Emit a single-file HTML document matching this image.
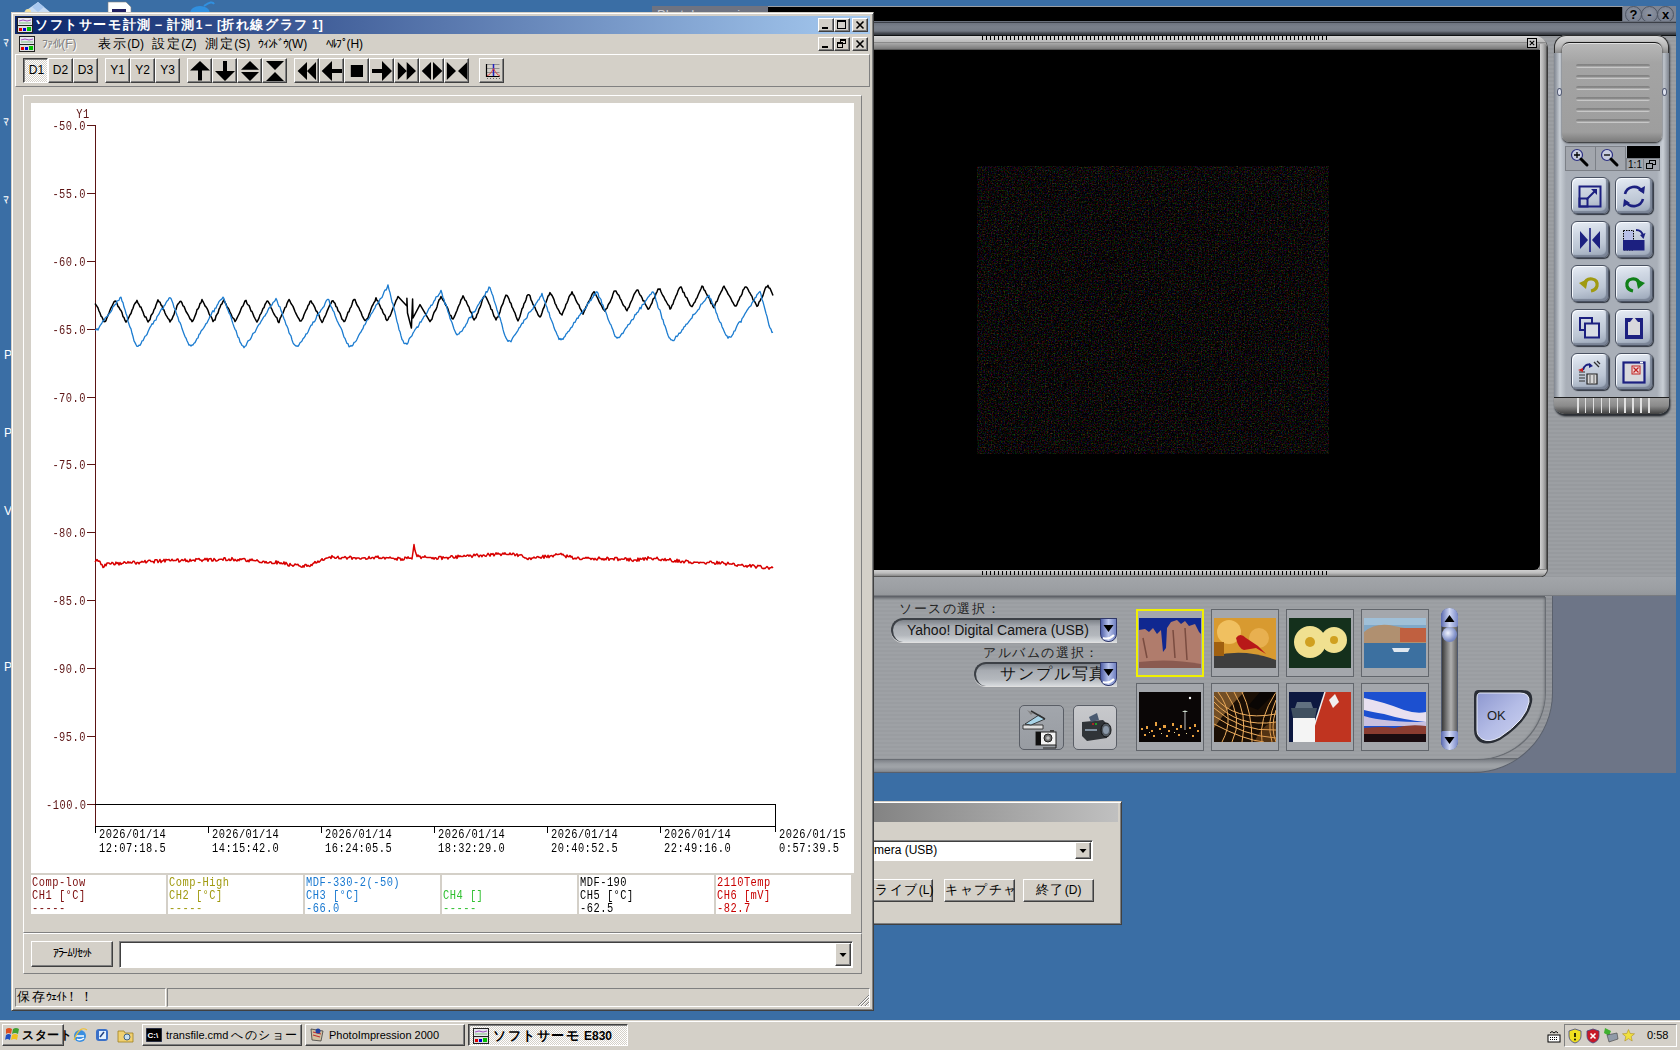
<!DOCTYPE html>
<html><head><meta charset="utf-8">
<style>
*{box-sizing:border-box;margin:0;padding:0}
html,body{width:1680px;height:1050px;overflow:hidden}
body{background:#3a6ea5;position:relative;font-family:"Liberation Sans",sans-serif;font-size:12px;color:#000}
.a{position:absolute}
.raised{background:#d4d0c8;border-top:1px solid #fff;border-left:1px solid #fff;border-right:1px solid #404040;border-bottom:1px solid #404040;box-shadow:inset -1px -1px 0 #808080}
.sunken{border-top:1px solid #808080;border-left:1px solid #808080;border-right:1px solid #fff;border-bottom:1px solid #fff;box-shadow:inset 1px 1px 0 #404040}
.mono{font-family:"Liberation Mono",monospace}
.menu{height:16px;line-height:16px;font-size:12px;white-space:nowrap}
.tbt{height:25px;line-height:25px;text-align:center;font-size:12px}
.ax{font-size:13px;line-height:10px;color:#5c1414;letter-spacing:0.6px;white-space:nowrap;transform:scaleX(.8);transform-origin:100% 0}
.xl{font-size:13px;line-height:13.5px;color:#000;letter-spacing:0.6px;white-space:nowrap;transform:scaleX(.8);transform-origin:0 0}
.lg{font-size:13px;line-height:13px;letter-spacing:0.6px;white-space:nowrap;transform:scaleX(.8);transform-origin:0 0}
.rbtn{width:17px;height:17px;border-radius:50%;border:1px solid #4e5563;background:radial-gradient(circle at 50% 40%,#8d94a2,#727989);color:#000;font-size:13px;font-weight:bold;line-height:15px;text-align:center}
.jf{font-size:1.12em;letter-spacing:.12em;line-height:0}.jh{letter-spacing:-.1em}.nols .jf{font-size:1em;letter-spacing:.05em}
</style></head><body>
<!-- ============ Desktop fragments ============ -->
<svg class="a" style="left:20px;top:0" width="40" height="14"><path d="M18 2 L30 12 H4 Z" fill="#c8dcf4"/><path d="M18 2 L24 7 L18 12 L12 7 Z" fill="#a8c8f0"/><circle cx="8" cy="12" r="3" fill="#f0e0a0"/></svg>
<svg class="a" style="left:105px;top:0" width="30" height="14"><path d="M3 2 H21 L26 7 V14 H3 Z" fill="#fff" stroke="#808080" stroke-width="0.6"/><rect x="7" y="9" width="14" height="3" fill="#202060"/></svg>
<svg class="a" style="left:186px;top:0" width="32" height="14"><ellipse cx="14" cy="13" rx="10" ry="7" fill="#3090e0"/><path d="M18 6 Q26 0 28 4" stroke="#3090e0" stroke-width="2" fill="none"/></svg>
<div class="a" style="left:3px;top:36px;color:#fff;font-size:12px;line-height:14px"><span class="jh">ﾏ</span></div>
<div class="a" style="left:3px;top:115px;color:#fff;font-size:12px;line-height:14px"><span class="jh">ﾏ</span></div>
<div class="a" style="left:3px;top:193px;color:#fff;font-size:12px;line-height:14px"><span class="jh">ﾏ</span></div>
<div class="a" style="left:4px;top:348px;color:#fff;font-size:12px;line-height:14px">P</div>
<div class="a" style="left:4px;top:426px;color:#fff;font-size:12px;line-height:14px">P</div>
<div class="a" style="left:4px;top:504px;color:#fff;font-size:12px;line-height:14px">V</div>
<div class="a" style="left:4px;top:660px;color:#fff;font-size:12px;line-height:14px">P</div>
<!-- ============ PhotoImpression ============ -->
<div class="a" style="left:652px;top:6px;width:116px;height:10px;background:#6e7381;color:#c8ccd4;font-size:13px;line-height:18px;padding-left:5px;overflow:hidden">PhotoImpression</div>
<div class="a" style="left:768px;top:6px;width:908px;height:767px;background:repeating-linear-gradient(180deg,#9c9fa3 0 2px,#979a9e 2px 4px)"></div>
<!-- title black field -->
<div class="a" style="left:768px;top:7px;width:855px;height:15px;background:#000;border-bottom:1px solid #606672;border-right:1px solid #606672"></div>
<div class="a" style="left:1623px;top:6px;width:53px;height:16px;background:#7e8593"></div>
<div class="a rbtn" style="left:1625px;top:6px">?</div>
<div class="a rbtn" style="left:1641px;top:6px">-</div>
<div class="a rbtn" style="left:1657px;top:6px">x</div>
<!-- band -->
<div class="a" style="left:768px;top:21px;width:908px;height:15px;background:linear-gradient(180deg,#6a707c 0,#6a707c 1px,#3c4048 1px,#3c4048 2px,#6e7480 2px,#7a808b 6px,#747a85 10px,#4a4e56 12px,#30343a 14px,#101214 14px)"></div>
<!-- preview frame -->
<div class="a" style="left:768px;top:36px;width:779px;height:541px;border-radius:0 12px 9px 0;background:#b4b4b4;box-shadow:1px 1px 0 #3a3a3a"></div>
<div class="a" style="left:768px;top:36px;width:779px;height:14px;border-radius:0 12px 0 0;background:linear-gradient(180deg,#d8d8d8 0,#bebebe 5px,#bcbcbc 6px,#8a8a8a 6px,#8a8a8a 7px,#aaaaaa 7px,#7a7a7a 13px,#3a3a3a 14px)"></div>
<div class="a" style="left:1539px;top:44px;width:8px;height:526px;border-radius:0 4px 0 0;background:linear-gradient(90deg,#3a3a3a 0,#cfcfcf 1px,#b4b4b4 50%,#8a8a8a 85%,#3a3a3a)"></div>
<div class="a" style="left:768px;top:569px;width:779px;height:8px;border-radius:0 0 10px 0;background:linear-gradient(180deg,#3a3a3a 0,#cfcfcf 1px,#bdbdbd 50%,#8a8a8a 85%,#3a3a3a)"></div>
<div class="a" style="left:768px;top:50px;width:772px;height:520px;background:#000;border-radius:0 0 6px 0"></div>
<div class="a" style="left:982px;top:36px;width:347px;height:4px;background:repeating-linear-gradient(90deg,#000 0 1px,transparent 1px 4px)"></div>
<div class="a" style="left:982px;top:571px;width:347px;height:4px;background:repeating-linear-gradient(90deg,#000 0 1px,transparent 1px 4px)"></div>
<div class="a" style="left:1527px;top:38px;width:10px;height:10px;border:1.3px solid #000;background:#c8c8c8"></div>
<svg class="a" style="left:1527px;top:38px" width="10" height="10"><path d="M2.8 2.8 L7.2 7.2 M7.2 2.8 L2.8 7.2" stroke="#000" stroke-width="1.1"/></svg>
<svg class="a" style="left:977px;top:166px" width="352" height="288"><filter id="nz" x="0" y="0" width="100%" height="100%" color-interpolation-filters="sRGB"><feTurbulence type="fractalNoise" baseFrequency="0.7" numOctaves="2" seed="3"/><feColorMatrix values="0.8 0 0 0 -0.375  0 0.7 0 0 -0.335  0 0 0.7 0 -0.335  0 0 0 0 1"/></filter><rect width="352" height="288" fill="#000"/><rect width="352" height="288" filter="url(#nz)"/></svg>
<!-- band below preview -->
<div class="a" style="left:768px;top:577px;width:908px;height:19px;background:linear-gradient(180deg,#a2a5a9 0%,#9c9fa3 60%,#95989c 92%,#6a6d72 100%)"></div>
<!-- lower panel -->
<div class="a" style="left:1300px;top:596px;width:376px;height:177px;background:#6d7587"></div>
<div class="a" style="left:768px;top:596px;width:785px;height:177px;border-bottom-right-radius:80px;background:linear-gradient(180deg,transparent 0,transparent 162px,#5e6268 162px,#7e8288 164px,#9a9ea3 168px,#a0a4a8 171px,#8a8e94 175px,#6a6e74 177px),repeating-linear-gradient(180deg,#95989d 0 2px,#8e9196 2px 4px);border-right:1px solid #5a606c;border-bottom:1px solid #5a606c"></div>
<div class="a" style="left:768px;top:596px;width:777px;height:163px;border-bottom-right-radius:68px;background:repeating-linear-gradient(180deg,#9ea1a5 0 2px,#9a9da1 2px 4px);box-shadow:inset 0 2px 3px #55595f,1px 1px 0 #6a6e74"></div>
<div class="a" style="left:1554px;top:35px;width:115px;height:379px;border-radius:12px 12px 10px 10px;background:linear-gradient(90deg,#7f858f 0,#c9cfd6 6px,#a9afb8 12px,#a9afb8 103px,#c9cfd6 109px,#7f858f 115px);box-shadow:1px 2px 2px #3a3e44"></div>
<div class="a" style="left:1554px;top:35px;width:115px;height:18px;border-radius:12px 12px 0 0;background:linear-gradient(180deg,#d8d8d8,#b8b8b8 60%,#8a8a8a);border:1px solid #2e2e2e;border-bottom:none"></div>
<div class="a" style="left:1562px;top:42px;width:100px;height:100px;border-radius:7px;background:linear-gradient(180deg,#b8b8b8,#a4a4a4 20%,#9e9e9e 90%,#7a7a7a);border-top:1px solid #1a1a1a;box-shadow:0 1px 2px #202020,inset 0 1px 0 #e0e0e0"></div>
<div class="a" style="left:1576px;top:64px;width:74px;height:4px;border-radius:2px;background:linear-gradient(180deg,#808080,#8a8a8a 40%,#d8d8d8)"></div>
<div class="a" style="left:1576px;top:75px;width:74px;height:4px;border-radius:2px;background:linear-gradient(180deg,#808080,#8a8a8a 40%,#d8d8d8)"></div>
<div class="a" style="left:1576px;top:86px;width:74px;height:4px;border-radius:2px;background:linear-gradient(180deg,#808080,#8a8a8a 40%,#d8d8d8)"></div>
<div class="a" style="left:1576px;top:97px;width:74px;height:4px;border-radius:2px;background:linear-gradient(180deg,#808080,#8a8a8a 40%,#d8d8d8)"></div>
<div class="a" style="left:1576px;top:108px;width:74px;height:4px;border-radius:2px;background:linear-gradient(180deg,#808080,#8a8a8a 40%,#d8d8d8)"></div>
<div class="a" style="left:1576px;top:119px;width:74px;height:4px;border-radius:2px;background:linear-gradient(180deg,#808080,#8a8a8a 40%,#d8d8d8)"></div>
<div class="a" style="left:1557px;top:88px;width:5px;height:8px;border-radius:50%;background:#dfe3f0;border:1px solid #505870"></div>
<div class="a" style="left:1662px;top:88px;width:5px;height:8px;border-radius:50%;background:#dfe3f0;border:1px solid #505870"></div>
<div class="a" style="left:1565px;top:146px;width:31px;height:25px;background:#a2a6ad;border:1px solid #7c8087"></div>
<div class="a" style="left:1595px;top:146px;width:31px;height:25px;background:#a2a6ad;border:1px solid #7c8087"></div>
<svg class="a" style="left:1569px;top:148px" width="24" height="22"><circle cx="8" cy="7" r="5.5" fill="#c8cce0" stroke="#2a2e80" stroke-width="1.2"/><path d="M5 7 H11 M8 4 V10" stroke="#000" stroke-width="1.3"/><path d="M12 11 L18 17" stroke="#000" stroke-width="3" stroke-linecap="round"/></svg>
<svg class="a" style="left:1599px;top:148px" width="24" height="22"><circle cx="8" cy="7" r="5.5" fill="#c8cce0" stroke="#2a2e80" stroke-width="1.2"/><path d="M5 7 H11" stroke="#000" stroke-width="1.3"/><path d="M12 11 L18 17" stroke="#000" stroke-width="3" stroke-linecap="round"/></svg>
<div class="a" style="left:1627px;top:146px;width:33px;height:12px;background:#000"></div>
<div class="a" style="left:1626px;top:158px;width:18px;height:13px;background:#a2a6ad;border:1px solid #7c8087;font-size:10px;line-height:11px;text-align:center;color:#000">1:1</div>
<div class="a" style="left:1643px;top:158px;width:17px;height:13px;background:#a2a6ad;border:1px solid #7c8087"></div>
<svg class="a" style="left:1643px;top:158px" width="17" height="13"><rect x="6.5" y="2.5" width="6" height="4" fill="none" stroke="#000"/><rect x="3.5" y="5.5" width="6" height="5" fill="#a2a6ad" stroke="#000"/></svg>
<div class="a" style="left:1571px;top:177px;width:38px;height:37px;border-radius:6px;background:linear-gradient(170deg,#e8eef6 0%,#d0d8e4 30%,#bcc6d4 65%,#96a2b4 100%);border:1px solid #4a5262;box-shadow:inset 1px 1px 0 #f8fbff,inset -2px -2px 1px #7a8496,1px 1px 1px #303640"></div>
<svg class="a" style="left:1571px;top:177px" width="38" height="37"><rect x="8.5" y="9.5" width="21" height="20" fill="none" stroke="#1c2080" stroke-width="2"/><rect x="8.5" y="21.5" width="8" height="8" fill="none" stroke="#1c2080" stroke-width="2"/><path d="M15.5 22.5 L25 13" stroke="#1c2080" stroke-width="2"/><path d="M20 12 H26 V18 Z" fill="#1c2080"/></svg>
<div class="a" style="left:1615px;top:177px;width:38px;height:37px;border-radius:6px;background:linear-gradient(170deg,#e8eef6 0%,#d0d8e4 30%,#bcc6d4 65%,#96a2b4 100%);border:1px solid #4a5262;box-shadow:inset 1px 1px 0 #f8fbff,inset -2px -2px 1px #7a8496,1px 1px 1px #303640"></div>
<svg class="a" style="left:1615px;top:177px" width="38" height="37"><path d="M10 17 A9.5 9.5 0 0 1 27 14" stroke="#1c2080" stroke-width="2.6" fill="none"/><path d="M28 22 A9.5 9.5 0 0 1 11 25" stroke="#1c2080" stroke-width="2.6" fill="none"/><path d="M23 13 L30 9 L29 17 Z M15 26 L8 30 L9 22 Z" fill="#1c2080"/></svg>
<div class="a" style="left:1571px;top:221px;width:38px;height:37px;border-radius:6px;background:linear-gradient(170deg,#e8eef6 0%,#d0d8e4 30%,#bcc6d4 65%,#96a2b4 100%);border:1px solid #4a5262;box-shadow:inset 1px 1px 0 #f8fbff,inset -2px -2px 1px #7a8496,1px 1px 1px #303640"></div>
<svg class="a" style="left:1571px;top:221px" width="38" height="37"><path d="M9 10 L17 19 L9 28 Z M29 10 L21 19 L29 28 Z" fill="#1c2080"/><path d="M19 7 V31" stroke="#1c2080" stroke-width="1.6"/></svg>
<div class="a" style="left:1615px;top:221px;width:38px;height:37px;border-radius:6px;background:linear-gradient(170deg,#e8eef6 0%,#d0d8e4 30%,#bcc6d4 65%,#96a2b4 100%);border:1px solid #4a5262;box-shadow:inset 1px 1px 0 #f8fbff,inset -2px -2px 1px #7a8496,1px 1px 1px #303640"></div>
<svg class="a" style="left:1615px;top:221px" width="38" height="37"><rect x="8.5" y="9.5" width="10" height="19.5" fill="#b8c0e8" stroke="#000" stroke-dasharray="1.5 1" stroke-width="1"/><rect x="8" y="19" width="21.5" height="10.5" fill="#1c2080"/><path d="M21 9 Q27 9 28 15" stroke="#1c2080" stroke-width="1.8" fill="none"/><path d="M25 14 L28.5 18 L30.5 12 Z" fill="#1c2080"/></svg>
<div class="a" style="left:1571px;top:265px;width:38px;height:37px;border-radius:6px;background:linear-gradient(170deg,#e8eef6 0%,#d0d8e4 30%,#bcc6d4 65%,#96a2b4 100%);border:1px solid #4a5262;box-shadow:inset 1px 1px 0 #f8fbff,inset -2px -2px 1px #7a8496,1px 1px 1px #303640"></div>
<svg class="a" style="left:1571px;top:265px" width="38" height="37"><path d="M13 20 Q15 13 21 14 Q27 15 26 21 Q25 25 20 26" stroke="#a09a10" stroke-width="3.2" fill="none"/><path d="M8 18 L17 14 L15 24 Z" fill="#a09a10"/></svg>
<div class="a" style="left:1615px;top:265px;width:38px;height:37px;border-radius:6px;background:linear-gradient(170deg,#e8eef6 0%,#d0d8e4 30%,#bcc6d4 65%,#96a2b4 100%);border:1px solid #4a5262;box-shadow:inset 1px 1px 0 #f8fbff,inset -2px -2px 1px #7a8496,1px 1px 1px #303640"></div>
<svg class="a" style="left:1615px;top:265px" width="38" height="37"><path d="M25 20 Q23 13 17 14 Q11 15 12 21 Q13 25 18 26" stroke="#108018" stroke-width="3.2" fill="none"/><path d="M30 18 L21 14 L23 24 Z" fill="#108018"/></svg>
<div class="a" style="left:1571px;top:309px;width:38px;height:37px;border-radius:6px;background:linear-gradient(170deg,#e8eef6 0%,#d0d8e4 30%,#bcc6d4 65%,#96a2b4 100%);border:1px solid #4a5262;box-shadow:inset 1px 1px 0 #f8fbff,inset -2px -2px 1px #7a8496,1px 1px 1px #303640"></div>
<svg class="a" style="left:1571px;top:309px" width="38" height="37"><rect x="9" y="9" width="12" height="12" fill="none" stroke="#1c2080" stroke-width="2"/><rect x="14" y="14.5" width="14" height="14" fill="#d8dce4" stroke="#1c2080" stroke-width="2"/></svg>
<div class="a" style="left:1615px;top:309px;width:38px;height:37px;border-radius:6px;background:linear-gradient(170deg,#e8eef6 0%,#d0d8e4 30%,#bcc6d4 65%,#96a2b4 100%);border:1px solid #4a5262;box-shadow:inset 1px 1px 0 #f8fbff,inset -2px -2px 1px #7a8496,1px 1px 1px #303640"></div>
<svg class="a" style="left:1615px;top:309px" width="38" height="37"><rect x="10" y="9" width="18" height="21" fill="#1c2080"/><rect x="13" y="13" width="12" height="13" fill="#d8d8dc"/><path d="M15 13 L19 8 L23 13 Z" fill="#d8d8dc"/></svg>
<div class="a" style="left:1571px;top:353px;width:38px;height:37px;border-radius:6px;background:linear-gradient(170deg,#e8eef6 0%,#d0d8e4 30%,#bcc6d4 65%,#96a2b4 100%);border:1px solid #4a5262;box-shadow:inset 1px 1px 0 #f8fbff,inset -2px -2px 1px #7a8496,1px 1px 1px #303640"></div>
<svg class="a" style="left:1571px;top:353px" width="38" height="37"><path d="M16 21 H26 V31 H16 Z" fill="#d8d8d8" stroke="#202020" stroke-width="1.2"/><path d="M19 22 V30 M23 22 V30" stroke="#606060"/><path d="M12 17 Q14 10 20 12" stroke="#1c2080" stroke-width="2" fill="none"/><path d="M18 10 L22 13 L18 15 Z" fill="#1c2080"/><path d="M8 19 H14 M8 22 H14 M8 25 H14 M8 28 H14" stroke="#303030" stroke-width="1"/><path d="M7 17 L12 15 L12 19 Z" fill="#d02020"/><path d="M23 9 L28 14 M26 8 L29 11" stroke="#303030" stroke-width="1.3"/></svg>
<div class="a" style="left:1615px;top:353px;width:38px;height:37px;border-radius:6px;background:linear-gradient(170deg,#e8eef6 0%,#d0d8e4 30%,#bcc6d4 65%,#96a2b4 100%);border:1px solid #4a5262;box-shadow:inset 1px 1px 0 #f8fbff,inset -2px -2px 1px #7a8496,1px 1px 1px #303640"></div>
<svg class="a" style="left:1615px;top:353px" width="38" height="37"><rect x="8.5" y="9.5" width="21" height="20" fill="#d8d8dc" stroke="#1c2080" stroke-width="2.2"/><rect x="17" y="13" width="8" height="8" fill="#f0d8d8" stroke="#c02020" stroke-width="1"/><path d="M18.5 14.5 L23.5 19.5 M23.5 14.5 L18.5 19.5" stroke="#c02020" stroke-width="1.2"/><path d="M25 9.5 H28" stroke="#fff" stroke-width="1.5"/></svg>
<div class="a" style="left:1554px;top:397px;width:115px;height:17px;border-radius:0 0 10px 10px;border-top:1px solid #202020;background:linear-gradient(180deg,#a0a0a0,#8a8a8a 50%,#404040);box-shadow:1px 2px 2px #2a2e34"></div>
<div class="a" style="left:1577px;top:398px;width:74px;height:15px;background:repeating-linear-gradient(90deg,#e0e0e0 0 1.5px,transparent 1.5px 7.9px)"></div>
<div class="a" style="left:899px;top:601px;height:16px;line-height:16px;font-size:12px;color:#202020;white-space:nowrap"><span class="jf">ソースの選択：</span></div>
<div class="a" style="left:891px;top:618px;width:226px;height:24px;border-radius:12px 0 0 12px;background:linear-gradient(180deg,#7e838a,#a8acb2 30%,#b4b8bd 70%,#d8dbde);border-top:2px solid #3c4046;border-left:2px solid #3c4046;box-shadow:0 1px 0 #e0e0e0"></div>
<div class="a" style="left:907px;top:621px;height:18px;line-height:18px;font-size:14px;color:#141414;white-space:nowrap">Yahoo! Digital Camera (USB)</div>
<div class="a" style="left:1100px;top:618px;width:17px;height:24px;border-radius:0 0 8px 8px;background:linear-gradient(90deg,#5060a8,#b8c4ec 50%,#7080c0);border:1px solid #30386a"></div>
<svg class="a" style="left:1100px;top:618px" width="17" height="24"><path d="M3.5 7 H13.5 L8.5 14 Z" fill="#000"/><path d="M3 20 Q9 22 14 17" stroke="#fff" stroke-width="2" fill="none"/></svg>
<div class="a" style="left:983px;top:645px;height:16px;line-height:16px;font-size:12px;color:#202020;white-space:nowrap"><span class="jf">アルバムの選択：</span></div>
<div class="a" style="left:974px;top:662px;width:143px;height:24px;border-radius:12px 0 0 12px;background:linear-gradient(180deg,#7e838a,#a8acb2 30%,#b4b8bd 70%,#d8dbde);border-top:2px solid #3c4046;border-left:2px solid #3c4046;box-shadow:0 1px 0 #e0e0e0"></div>
<div class="a" style="left:1000px;top:665px;height:18px;line-height:18px;font-size:14px;color:#141414;white-space:nowrap"><span class="jf">サンプル写真</span></div>
<div class="a" style="left:1100px;top:662px;width:17px;height:24px;border-radius:0 0 8px 8px;background:linear-gradient(90deg,#5060a8,#b8c4ec 50%,#7080c0);border:1px solid #30386a"></div>
<svg class="a" style="left:1100px;top:662px" width="17" height="24"><path d="M3.5 7 H13.5 L8.5 14 Z" fill="#000"/><path d="M3 20 Q9 22 14 17" stroke="#fff" stroke-width="2" fill="none"/></svg>
<div class="a" style="left:1019px;top:705px;width:45px;height:45px;border-radius:5px;background:linear-gradient(180deg,#a2a6ac,#989ca2);border:1px solid #5a5e66"></div>
<svg class="a" style="left:1019px;top:705px" width="45" height="45"><path d="M4 20 L24 20 L24 24 L4 24 Z" fill="#e0e0e0" stroke="#202020" stroke-width="0.8"/><path d="M6 19 L20 10 L26 14 L12 20 Z" fill="#a8d4e8" stroke="#202020" stroke-width="0.8"/><path d="M12 6 L26 14" stroke="#303030" stroke-width="1.5"/><path d="M8 5 L14 8 L12 10 Z" fill="#808080"/><rect x="17" y="27" width="20" height="13" fill="#f4f4f4" stroke="#202020"/><rect x="17" y="27" width="5" height="13" fill="#101010"/><circle cx="29" cy="33" r="4" fill="#707070" stroke="#202020"/><circle cx="29" cy="33" r="1.8" fill="#c0c0c0"/><path d="M24 43 H37 V40" stroke="#202020" fill="none"/><rect x="31" y="25" width="4" height="2" fill="#404040"/></svg>
<div class="a" style="left:1073px;top:705px;width:44px;height:45px;border-radius:5px;background:linear-gradient(180deg,#c8c9cc,#b8babe);border:1px solid #5a5e66"></div>
<svg class="a" style="left:1073px;top:705px" width="44" height="45"><path d="M9 17 L30 15 L34 19 L34 33 L14 36 L9 31 Z" fill="#303438"/><path d="M16 12 L24 8 L26 15 L18 17 Z" fill="#4a5a70"/><ellipse cx="33" cy="25" rx="5" ry="7" fill="#505860" stroke="#101010"/><ellipse cx="33" cy="25" rx="3" ry="4" fill="#8a98a8"/><path d="M12 25 H24" stroke="#8090a0" stroke-width="2"/><circle cx="20" cy="19" r="1" fill="#d02020"/><circle cx="23" cy="19" r="1" fill="#20c020"/></svg>
<div class="a" style="left:1136px;top:609px;width:68px;height:68px;background:#a4a7ac;border:2px solid #f0f000"></div>
<svg class="a" style="left:1139px;top:618px" width="62" height="50"><rect width="62" height="50" fill="#102890"/><path d="M0 12 L6 11 L10 14 L14 10 L18 16 L22 12 L24 34 L27 30 L28 10 L32 4 L38 2 L42 6 L46 3 L50 8 L56 6 L60 14 L62 16 V50 H0 Z" fill="#b07c6c"/><path d="M4 20 L8 40 M34 12 L36 40 M46 10 L48 42" stroke="#7a4c40" stroke-width="1.5"/><path d="M0 44 Q30 40 62 46 V50 H0 Z" fill="#8a5a50"/></svg>
<div class="a" style="left:1211px;top:609px;width:68px;height:68px;background:#a4a7ac;border:1px solid #62666c"></div>
<svg class="a" style="left:1214px;top:618px" width="62" height="50"><rect width="62" height="50" fill="#d89a30"/><circle cx="15" cy="14" r="12" fill="#f0c060"/><circle cx="45" cy="20" r="10" fill="#e8b050"/><path d="M0 38 Q30 30 62 42 V50 H0 Z" fill="#3e3e3e"/><path d="M22 20 Q26 14 32 20 L44 28 L52 36 L42 30 L30 32 Q24 30 22 20 Z" fill="#b81818"/><rect x="0" y="24" width="10" height="14" fill="#a06010"/></svg>
<div class="a" style="left:1286px;top:609px;width:68px;height:68px;background:#a4a7ac;border:1px solid #62666c"></div>
<svg class="a" style="left:1289px;top:618px" width="62" height="50"><rect width="62" height="50" fill="#14301c"/><circle cx="21" cy="24" r="16" fill="#f0e090"/><circle cx="45" cy="22" r="13" fill="#f0e090"/><circle cx="21" cy="24" r="5" fill="#d0a020"/><circle cx="45" cy="22" r="4" fill="#d0a020"/></svg>
<div class="a" style="left:1361px;top:609px;width:68px;height:68px;background:#a4a7ac;border:1px solid #62666c"></div>
<svg class="a" style="left:1364px;top:618px" width="62" height="50"><rect width="62" height="50" fill="#80a8c8"/><rect y="0" width="62" height="7" fill="#a0c0d8"/><path d="M0 14 Q12 4 30 8 L62 14 V26 H0 Z" fill="#b09070"/><rect x="36" y="10" width="26" height="14" fill="#c06040"/><rect y="25" width="62" height="25" fill="#3c70a0"/><path d="M28 30 H46 L44 34 H30 Z" fill="#e0e8f0"/></svg>
<div class="a" style="left:1136px;top:683px;width:68px;height:68px;background:#a4a7ac;border:1px solid #62666c"></div>
<svg class="a" style="left:1139px;top:692px" width="62" height="50"><rect width="62" height="50" fill="#0a0606"/><circle cx="51" cy="6" r="1.2" fill="#fff"/><path d="M43 20 Q46 17 49 20 Z" fill="#d0e0d0"/><path d="M46 20 V38" stroke="#a0a0a0" stroke-width="1.2"/><g fill="#e8a040"><rect x="2" y="36" width="2" height="2"/><rect x="7" y="34" width="2" height="3"/><rect x="12" y="38" width="2" height="2"/><rect x="16" y="30" width="2" height="4"/><rect x="20" y="36" width="2" height="2"/><rect x="24" y="33" width="3" height="3"/><rect x="29" y="38" width="2" height="2"/><rect x="33" y="31" width="2" height="3"/><rect x="37" y="36" width="2" height="2"/><rect x="41" y="33" width="2" height="3"/><rect x="50" y="35" width="2" height="2"/><rect x="55" y="32" width="2" height="3"/><rect x="58" y="38" width="2" height="2"/><rect x="5" y="42" width="2" height="2"/><rect x="14" y="43" width="2" height="2"/><rect x="27" y="43" width="2" height="2"/><rect x="39" y="42" width="2" height="2"/><rect x="53" y="43" width="2" height="2"/></g><g fill="#f0e0a0"><rect x="10" y="40" width="1" height="1"/><rect x="22" y="41" width="1" height="1"/><rect x="35" y="40" width="1" height="1"/><rect x="47" y="41" width="1" height="1"/></g></svg>
<div class="a" style="left:1211px;top:683px;width:68px;height:68px;background:#a4a7ac;border:1px solid #62666c"></div>
<svg class="a" style="left:1214px;top:692px" width="62" height="50"><rect width="62" height="50" fill="#1a0e04"/><g stroke="#f0b060" stroke-width="1" fill="none"><path d="M0 4 Q20 30 62 22 M0 10 Q24 36 62 30 M0 16 Q26 40 62 38 M0 24 Q30 44 62 46 M0 32 Q30 48 50 50 M4 0 Q22 24 8 50 M12 0 Q30 26 18 50 M20 0 Q34 22 28 50 M28 0 Q38 20 38 50 M62 0 Q44 28 48 50 M62 8 Q52 30 58 50 M62 18 Q56 36 62 50"/></g><path d="M34 14 L46 0 H62 L44 18 Z" fill="#0a0604"/><path d="M0 0 H30 Q12 18 0 36 Z" fill="#e0a050" opacity="0.45"/><path d="M40 50 Q50 30 62 30 V50 Z" fill="#c07830" opacity="0.35"/></svg>
<div class="a" style="left:1286px;top:683px;width:68px;height:68px;background:#a4a7ac;border:1px solid #62666c"></div>
<svg class="a" style="left:1289px;top:692px" width="62" height="50"><rect width="62" height="50" fill="#0c1840"/><path d="M36 0 H62 V50 H20 Z" fill="#c03420"/><path d="M36 0 L20 50" stroke="#f0f0f0" stroke-width="1.5"/><path d="M40 8 L46 2 L50 10 L44 16 Z" fill="#f0f0f0"/><rect x="4" y="24" width="22" height="26" fill="#f4f4f4"/><path d="M2 16 H28 L26 26 H4 Z" fill="#405060"/><path d="M8 10 H22 L24 16 H6 Z" fill="#607080"/></svg>
<div class="a" style="left:1361px;top:683px;width:68px;height:68px;background:#a4a7ac;border:1px solid #62666c"></div>
<svg class="a" style="left:1364px;top:692px" width="62" height="50"><rect width="62" height="50" fill="#1c50d0"/><path d="M0 6 Q20 10 40 18 Q52 22 62 20 V30 Q40 28 20 22 Q8 20 0 18 Z" fill="#e8e0f0"/><path d="M0 24 Q20 30 62 30 V34 H0 Z" fill="#c8c0e0"/><path d="M0 36 Q20 34 30 36 Q45 32 62 34 V50 H0 Z" fill="#8a3c30"/><rect y="42" width="62" height="8" fill="#1a0c10"/></svg>
<div class="a" style="left:1441px;top:608px;width:17px;height:142px;border-radius:8px;background:linear-gradient(90deg,#3a3a3a,#8a8a8a 40%,#b0b0b0 60%,#606060);border:1px solid #505a70"></div>
<div class="a" style="left:1441px;top:608px;width:17px;height:19px;border-radius:8px 8px 2px 2px;background:linear-gradient(90deg,#5868b0,#d0d8f4 50%,#7888c8)"></div>
<svg class="a" style="left:1441px;top:608px" width="17" height="19"><path d="M3.5 14 H13.5 L8.5 7 Z" fill="#000"/></svg>
<div class="a" style="left:1442px;top:627px;width:15px;height:15px;border-radius:50%;background:radial-gradient(circle at 40% 40%,#f0f4ff,#8090c8 60%,#5060a0)"></div>
<div class="a" style="left:1441px;top:731px;width:17px;height:19px;border-radius:2px 2px 8px 8px;background:linear-gradient(90deg,#5868b0,#d0d8f4 50%,#7888c8)"></div>
<svg class="a" style="left:1441px;top:731px" width="17" height="19"><path d="M3.5 6 H13.5 L8.5 13 Z" fill="#000"/></svg>
<svg class="a" style="left:1470px;top:686px" width="68" height="62"><path d="M8 4 H52 Q64 4 62 16 Q58 36 30 54 Q18 60 10 56 Q4 52 4 44 V10 Q4 4 8 4 Z" fill="#2a2e36"/><path d="M10 7 H50 Q60 7 59 16 Q56 34 30 51 Q19 57 12 53 Q7 50 7 44 V12 Q7 7 10 7 Z" fill="url(#okg)" stroke="#e8ecf8" stroke-width="1"/><defs><linearGradient id="okg" x1="0" y1="0" x2="1" y2="1"><stop offset="0" stop-color="#8e98d0"/><stop offset="0.5" stop-color="#b4bce6"/><stop offset="1" stop-color="#cfd4f2"/></linearGradient></defs><text x="17" y="34" font-family="Liberation Sans" font-size="13" fill="#202020">OK</text></svg><!-- ============ Dialog ============ -->
<div class="a" style="left:860px;top:801px;width:262px;height:124px;background:#d4d0c8;border-top:1px solid #d4d0c8;border-right:1px solid #404040;border-bottom:1px solid #404040;box-shadow:inset 0 1px 0 #fff,inset -1px -1px 0 #808080"></div>
<div class="a" style="left:860px;top:803px;width:258px;height:19px;background:linear-gradient(90deg,#808080,#c0c0c0)"></div>
<div class="a sunken" style="left:860px;top:840px;width:233px;height:21px;background:#fff"></div>
<div class="a" style="left:874px;top:842px;height:17px;line-height:17px;font-size:12px;white-space:nowrap">mera (USB)</div>
<div class="a raised" style="left:1075px;top:842px;width:16px;height:17px"></div>
<svg class="a" style="left:1075px;top:842px" width="16" height="17"><path d="M4.5 7 H11.5 L8 11 Z" fill="#000"/></svg>
<div class="a raised" style="left:860px;top:879px;width:73px;height:23px"></div>
<div class="a" style="left:875px;top:880px;height:21px;line-height:21px;font-size:12px;white-space:nowrap"><span class="jf">ライブ</span>(L)</div>
<div class="a raised" style="left:944px;top:879px;width:71px;height:23px"></div>
<div class="a" style="left:945px;top:880px;width:69px;height:21px;line-height:21px;font-size:12px;white-space:nowrap;overflow:hidden"><span class="jf">キャプチャ</span>(C)</div>
<div class="a raised" style="left:1023px;top:879px;width:71px;height:23px"></div>
<div class="a" style="left:1023px;top:880px;width:71px;height:21px;line-height:21px;font-size:12px;text-align:center;white-space:nowrap"><span class="jf">終了</span>(D)</div>
<!-- ============ Main window ============ -->
<div class="a" style="left:11px;top:12px;width:863px;height:999px;background:#d4d0c8;border-top:1px solid #d4d0c8;border-left:1px solid #d4d0c8;border-right:1px solid #404040;border-bottom:1px solid #404040;box-shadow:inset 1px 1px 0 #fff,inset -1px -1px 0 #808080"></div>
<!-- title bar -->
<div class="a" style="left:15px;top:16px;width:855px;height:18px;background:linear-gradient(90deg,#0a246a 0%,#a6caf0 100%)"></div>
<svg class="a" style="left:17px;top:17px" width="16" height="16" viewBox="0 0 16 16"><rect x="0" y="0" width="16" height="16" fill="#222"/><rect x="1" y="1" width="14" height="7" fill="#e8e8f0"/><path d="M2 4 L6 3 L10 4 L14 3" stroke="#a050c0" stroke-width="1" fill="none"/><path d="M2 6 L14 6" stroke="#80c080" stroke-width="1"/><rect x="1" y="9" width="14" height="6" fill="#ddd"/><rect x="2" y="11" width="3" height="3" fill="#e00000"/><rect x="6" y="11" width="3" height="3" fill="#0000d0"/><rect x="10" y="10" width="4" height="4" fill="#00c000"/></svg>
<div class="a" style="left:35px;top:17px;height:16px;line-height:16px;color:#fff;font-weight:bold;font-size:12px;white-space:nowrap"><span class="jf">ソフトサーモ計測－計測</span>1<span class="jf">－</span>[<span class="jf">折れ線グラフ</span> 1]</div>
<!-- caption buttons -->
<div class="a raised" style="left:818px;top:18px;width:16px;height:14px"></div>
<div class="a" style="left:822px;top:27px;width:6px;height:2px;background:#000"></div>
<div class="a raised" style="left:834px;top:18px;width:16px;height:14px"></div>
<div class="a" style="left:837px;top:20px;width:9px;height:9px;border:1px solid #000;border-top-width:2px"></div>
<div class="a raised" style="left:852px;top:18px;width:16px;height:14px"></div>
<svg class="a" style="left:852px;top:18px" width="16" height="14"><path d="M4.5 3.5 L11.5 10.5 M11.5 3.5 L4.5 10.5" stroke="#000" stroke-width="1.6"/></svg>
<!-- menu bar -->
<svg class="a" style="left:19px;top:36px" width="16" height="16" viewBox="0 0 16 16"><rect x="0" y="0" width="16" height="16" fill="#222"/><rect x="1" y="1" width="14" height="7" fill="#e8e8f0"/><path d="M2 4 L6 3 L10 4 L14 3" stroke="#a050c0" stroke-width="1" fill="none"/><path d="M2 6 L14 6" stroke="#80c080" stroke-width="1"/><rect x="1" y="9" width="14" height="6" fill="#ddd"/><rect x="2" y="11" width="3" height="3" fill="#e00000"/><rect x="6" y="11" width="3" height="3" fill="#0000d0"/><rect x="10" y="10" width="4" height="4" fill="#00c000"/></svg>
<div class="a menu" style="left:42px;top:36px;color:#808080;text-shadow:1px 1px 0 #fff"><span class="jh">ﾌｧｲﾙ</span>(F)</div>
<div class="a menu" style="left:98px;top:36px"><span class="jf">表示</span>(D)</div>
<div class="a menu" style="left:152px;top:36px"><span class="jf">設定</span>(Z)</div>
<div class="a menu" style="left:205px;top:36px"><span class="jf">測定</span>(S)</div>
<div class="a menu" style="left:258px;top:36px"><span class="jh">ｳｨﾝﾄﾞｳ</span>(W)</div>
<div class="a menu" style="left:326px;top:36px"><span class="jh">ﾍﾙﾌﾟ</span>(H)</div>
<div class="a raised" style="left:818px;top:37px;width:16px;height:14px"></div>
<div class="a" style="left:822px;top:46px;width:6px;height:2px;background:#000"></div>
<div class="a raised" style="left:834px;top:37px;width:16px;height:14px"></div>
<div class="a" style="left:840px;top:39px;width:6px;height:5px;border:1px solid #000;border-top-width:2px"></div>
<div class="a" style="left:837px;top:42px;width:6px;height:6px;border:1px solid #000;border-top-width:2px;background:#d4d0c8"></div>
<div class="a raised" style="left:852px;top:37px;width:16px;height:14px"></div>
<svg class="a" style="left:852px;top:37px" width="16" height="14"><path d="M4.5 3.5 L11.5 10.5 M11.5 3.5 L4.5 10.5" stroke="#000" stroke-width="1.6"/></svg>
<!-- toolbar -->
<div class="a" style="left:15px;top:54px;width:855px;height:33px;border-top:1px solid #fff;border-left:1px solid #fff;border-bottom:1px solid #808080;border-right:1px solid #808080"></div>
<div class="a" style="left:23px;top:58px;width:25px;height:25px;border-top:1px solid #404040;border-left:1px solid #404040;border-right:1px solid #fff;border-bottom:1px solid #fff;box-shadow:inset 1px 1px 0 #808080;background:repeating-conic-gradient(#fff 0 25%,#d4d0c8 0 50%) 0 0/2px 2px"></div>
<div class="a tbt" style="left:24px;top:58px;width:25px">D1</div>
<div class="a raised" style="left:48px;top:58px;width:25px;height:25px"></div>
<div class="a tbt" style="left:48px;top:58px;width:25px">D2</div>
<div class="a raised" style="left:73px;top:58px;width:25px;height:25px"></div>
<div class="a tbt" style="left:73px;top:58px;width:25px">D3</div>
<div class="a raised" style="left:105px;top:58px;width:25px;height:25px"></div>
<div class="a tbt" style="left:105px;top:58px;width:25px">Y1</div>
<div class="a raised" style="left:130px;top:58px;width:25px;height:25px"></div>
<div class="a tbt" style="left:130px;top:58px;width:25px">Y2</div>
<div class="a raised" style="left:155px;top:58px;width:25px;height:25px"></div>
<div class="a tbt" style="left:155px;top:58px;width:25px">Y3</div>
<div class="a raised" style="left:187px;top:58px;width:25px;height:25px"></div>
<svg class="a" style="left:187px;top:58px" width="25" height="25"><path d="M13 3 L23 12.6 L15 12.6 L15 22.6 L11 22.6 L11 12.6 L3 12.6 Z" fill="#000"/></svg>
<div class="a raised" style="left:212px;top:58px;width:25px;height:25px"></div>
<svg class="a" style="left:212px;top:58px" width="25" height="25"><path d="M11 3 L15 3 L15 13 L23 13 L13 23 L3 13 L11 13 Z" fill="#000"/></svg>
<div class="a raised" style="left:237px;top:58px;width:25px;height:25px"></div>
<svg class="a" style="left:237px;top:58px" width="25" height="25"><path d="M13 3 L22 11.7 L4 11.7 Z M4 13.9 L22 13.9 L13 23 Z" fill="#000"/></svg>
<div class="a raised" style="left:262px;top:58px;width:25px;height:25px"></div>
<svg class="a" style="left:262px;top:58px" width="25" height="25"><path d="M4 3 L22 3 L13 12 Z M13 14 L22 23 L4 23 Z" fill="#000"/></svg>
<div class="a raised" style="left:294px;top:58px;width:25px;height:25px"></div>
<svg class="a" style="left:294px;top:58px" width="25" height="25"><path d="M3.6 13 L13 4 L13 22 Z M13 13 L22 4 L22 22 Z" fill="#000"/></svg>
<div class="a raised" style="left:319px;top:58px;width:25px;height:25px"></div>
<svg class="a" style="left:319px;top:58px" width="25" height="25"><path d="M2.7 13 L13 3 L13 11 L23 11 L23 15 L13 15 L13 23 Z" fill="#000"/></svg>
<div class="a raised" style="left:344px;top:58px;width:25px;height:25px"></div>
<svg class="a" style="left:344px;top:58px" width="25" height="25"><path d="M6.8 7 L19 7 L19 19 L6.8 19 Z" fill="#000"/></svg>
<div class="a raised" style="left:369px;top:58px;width:25px;height:25px"></div>
<svg class="a" style="left:369px;top:58px" width="25" height="25"><path d="M3 11 L13 11 L13 3 L23 13 L13 23 L13 15 L3 15 Z" fill="#000"/></svg>
<div class="a raised" style="left:394px;top:58px;width:25px;height:25px"></div>
<svg class="a" style="left:394px;top:58px" width="25" height="25"><path d="M3.8 4 L12.7 13 L3.8 22 Z M12.7 4 L22 13 L12.7 22 Z" fill="#000"/></svg>
<div class="a raised" style="left:419px;top:58px;width:25px;height:25px"></div>
<svg class="a" style="left:419px;top:58px" width="25" height="25"><path d="M2.8 13 L12 4 L12 22 Z M14 4 L23.3 13 L14 22 Z" fill="#000"/></svg>
<div class="a raised" style="left:444px;top:58px;width:25px;height:25px"></div>
<svg class="a" style="left:444px;top:58px" width="25" height="25"><path d="M2.8 4 L12 13 L2.8 22 Z M23.3 4 L23.3 22 L14 13 Z" fill="#000"/></svg>
<div class="a raised" style="left:479px;top:58px;width:25px;height:25px"></div>
<svg class="a" style="left:479px;top:58px" width="25" height="25"><path d="M7 6.5 H20.5 M7 10.5 H20.5 M7 14.5 H20.5 M7 18.5 H20.5" stroke="#909090" stroke-width="1"/><path d="M14.5 6 V19" stroke="#2020c0" stroke-width="1.5"/><path d="M8 17.5 Q11 17.5 14.5 10.5 Q18 17.5 21 17.5" stroke="#e04040" stroke-width="1" fill="none"/><path d="M7.5 6 V18.5 H20.5" stroke="#000" stroke-width="1.2" fill="none"/><path d="M8.5 20 V21 M11.5 20 V21 M14.5 20 V21 M17.5 20 V21 M20.5 20 V21" stroke="#666" stroke-width="1"/></svg><div class="a" style="left:23px;top:95px;width:839px;height:838px;border-top:1px solid #fff;border-left:1px solid #fff;border-right:1px solid #808080;border-bottom:1px solid #808080"></div>
<div class="a" style="left:31px;top:103px;width:823px;height:770px;background:#fff"></div>
<svg class="a" style="left:31px;top:103px" width="823" height="770" viewBox="31 103 823 770">
<g stroke="#5c1414" stroke-width="1" fill="none" shape-rendering="crispEdges">
<path d="M95.5 125 V826"/>
<path d="M87 125.5 H95"/>
<path d="M87 193.5 H95"/>
<path d="M87 261.5 H95"/>
<path d="M87 329.5 H95"/>
<path d="M87 397.5 H95"/>
<path d="M87 464.5 H95"/>
<path d="M87 532.5 H95"/>
<path d="M87 600.5 H95"/>
<path d="M87 668.5 H95"/>
<path d="M87 736.5 H95"/>
<path d="M87 804.5 H95"/>
</g>
<g stroke="#000" stroke-width="1" fill="none" shape-rendering="crispEdges">
<path d="M95 804.5 H775.5 V832 M95 826.5 H775"/>
<path d="M95.5 826 V833"/>
<path d="M208.5 826 V833"/>
<path d="M321.5 826 V833"/>
<path d="M434.5 826 V833"/>
<path d="M547.5 826 V833"/>
<path d="M660.5 826 V833"/>
</g>
<polyline points="95.0,303.5 96.0,304.9 97.0,306.4 98.0,307.9 99.0,311.0 100.0,313.0 101.0,316.1 102.0,317.0 103.0,319.4 104.0,321.7 105.0,321.6 106.0,320.6 107.0,317.6 108.0,315.4 109.0,313.1 110.0,310.2 111.0,307.9 112.0,306.1 113.0,304.0 114.0,301.9 115.0,301.0 116.0,301.2 117.0,303.5 118.0,306.4 119.0,307.4 120.0,309.4 121.0,310.5 122.0,312.6 123.0,316.6 124.0,317.5 125.0,320.4 126.0,322.1 127.0,320.6 128.0,319.1 129.0,317.0 130.0,314.8 131.0,313.5 132.0,310.2 133.0,308.3 134.0,305.1 135.0,303.4 136.0,302.4 137.0,300.4 138.0,303.1 139.0,304.5 140.0,306.9 141.0,306.9 142.0,309.9 143.0,312.0 144.0,315.1 145.0,317.1 146.0,317.0 147.0,319.8 148.0,322.0 149.0,320.6 150.0,319.6 151.0,315.5 152.0,314.2 153.0,312.9 154.0,309.6 155.0,308.3 156.0,305.0 157.0,302.4 158.0,299.9 159.0,301.8 160.0,302.1 161.0,304.9 162.0,305.9 163.0,309.4 164.0,310.0 165.0,313.0 166.0,315.1 167.0,316.6 168.0,318.5 169.0,319.3 170.0,322.0 171.0,320.1 172.0,319.1 173.0,316.4 174.0,314.6 175.0,310.8 176.0,309.5 177.0,305.7 178.0,304.0 179.0,302.9 180.0,301.5 181.0,301.3 182.0,303.0 183.0,305.9 184.0,306.4 185.0,308.9 186.0,311.5 187.0,313.0 188.0,314.6 189.0,316.5 190.0,318.9 191.0,319.7 192.0,321.6 193.0,320.6 194.0,318.6 195.0,315.9 196.0,313.6 197.0,309.7 198.0,308.9 199.0,307.1 200.0,303.5 201.0,302.9 202.0,299.5 203.0,301.7 204.0,303.5 205.0,305.9 206.0,306.9 207.0,308.4 208.0,310.5 209.0,313.6 210.0,315.6 211.0,316.5 212.0,318.4 213.0,321.6 214.0,320.1 215.0,320.1 216.0,316.0 217.0,314.3 218.0,313.0 219.0,309.2 220.0,307.3 221.0,304.6 222.0,303.9 223.0,301.4 224.0,299.9 225.0,302.6 226.0,304.0 227.0,306.9 228.0,307.9 229.0,309.4 230.0,312.0 231.0,314.1 232.0,316.6 233.0,318.0 234.0,318.8 235.0,321.5 236.0,320.1 237.0,318.1 238.0,316.0 239.0,314.2 240.0,311.9 241.0,309.1 242.0,306.8 243.0,306.0 244.0,303.4 245.0,300.9 246.0,300.3 247.0,303.6 248.0,304.9 249.0,305.4 250.0,307.9 251.0,311.0 252.0,311.5 253.0,314.1 254.0,316.6 255.0,318.5 256.0,320.3 257.0,322.0 258.0,320.1 259.0,318.1 260.0,314.9 261.0,313.6 262.0,311.3 263.0,308.5 264.0,307.7 265.0,304.5 266.0,302.9 267.0,301.0 268.0,301.3 269.0,303.0 270.0,304.4 271.0,307.9 272.0,309.4 273.0,312.0 274.0,314.0 275.0,315.6 276.0,317.0 277.0,317.9 278.0,321.7 279.0,322.6 280.0,318.6 281.0,316.6 282.0,314.4 283.0,313.1 284.0,310.2 285.0,307.4 286.0,307.1 287.0,303.5 288.0,301.4 289.0,299.5 290.0,301.2 291.0,303.5 292.0,304.9 293.0,306.4 294.0,308.9 295.0,311.5 296.0,313.6 297.0,315.6 298.0,317.5 299.0,318.9 300.0,321.1 301.0,321.1 302.0,319.6 303.0,318.0 304.0,314.8 305.0,312.5 306.0,310.2 307.0,308.8 308.0,305.6 309.0,304.4 310.0,301.4 311.0,300.9 312.0,303.1 313.0,304.0 314.0,305.9 315.0,307.9 316.0,310.9 317.0,311.5 318.0,314.1 319.0,315.1 320.0,318.5 321.0,320.3 322.0,322.5 323.0,321.1 324.0,318.1 325.0,316.5 326.0,314.2 327.0,311.4 328.0,309.1 329.0,306.8 330.0,304.5 331.0,303.4 332.0,300.9 333.0,300.7 334.0,302.4 335.0,303.3 336.0,306.7 337.0,307.2 338.0,310.7 339.0,311.8 340.0,313.3 341.0,316.3 342.0,319.2 343.0,320.0 344.0,321.7 345.0,320.9 346.0,318.3 347.0,315.5 348.0,312.2 349.0,311.8 350.0,308.4 351.0,307.1 352.0,304.3 353.0,300.6 354.0,299.6 355.0,299.4 356.0,302.6 357.0,305.0 358.0,306.5 359.0,308.1 360.0,310.7 361.0,312.2 362.0,315.3 363.0,317.3 364.0,319.2 365.0,320.5 366.0,319.9 367.0,318.9 368.0,317.7 369.0,314.4 370.0,312.0 371.0,309.1 372.0,306.2 373.0,304.8 374.0,302.5 375.0,301.3 376.0,297.8 377.0,300.5 378.0,300.9 379.0,303.8 380.0,305.9 381.0,308.5 382.0,309.6 383.0,312.7 384.0,314.3 385.0,315.3 386.0,319.2 387.0,320.5 388.0,319.5 389.0,316.9 390.0,316.2 391.0,313.8 392.0,310.9 393.0,308.4 394.0,305.9 395.0,303.5 396.0,300.7 397.0,299.1 398.0,296.5 406.9,306.0 406.9,298.3 407.5,313.0 411.4,328.0 412.6,299.0 413.0,318.0 420.0,304.6 430.0,321.7 431.0,320.1 432.0,319.1 433.0,315.4 434.0,312.5 435.0,311.0 436.0,309.5 437.0,306.9 438.0,302.9 439.0,299.9 440.0,299.1 441.0,296.5 442.0,298.3 443.0,300.2 444.0,301.3 445.0,303.4 446.0,305.6 447.0,306.9 448.0,309.1 449.0,312.4 450.0,315.5 451.0,315.6 452.0,318.6 453.0,319.0 454.0,317.4 455.0,315.1 456.0,312.6 457.0,310.5 458.0,307.4 459.0,305.3 460.0,303.3 461.0,299.8 462.0,298.5 463.0,295.8 464.0,297.7 465.0,300.2 466.0,300.8 467.0,303.5 468.0,305.8 469.0,307.1 470.0,310.9 471.0,312.2 472.0,313.9 473.0,318.0 474.0,320.0 475.0,318.5 476.0,317.7 477.0,314.3 478.0,312.8 479.0,309.1 480.0,307.4 481.0,304.7 482.0,301.1 483.0,298.1 484.0,296.3 485.0,296.1 486.0,297.0 487.0,299.1 488.0,301.3 489.0,303.6 490.0,305.5 491.0,309.4 492.0,309.8 493.0,313.1 494.0,316.3 495.0,317.5 496.0,320.0 497.0,317.4 498.0,317.0 499.0,314.5 500.0,311.9 501.0,307.6 502.0,305.4 503.0,303.6 504.0,300.0 505.0,297.4 506.0,295.1 507.0,295.4 508.0,297.0 509.0,299.1 510.0,302.4 511.0,303.3 512.0,307.2 513.0,308.7 514.0,311.1 515.0,313.0 516.0,316.3 517.0,318.9 518.0,320.9 519.0,318.8 520.0,316.3 521.0,312.6 522.0,308.8 523.0,307.5 524.0,303.6 525.0,302.3 526.0,299.7 527.0,295.7 528.0,294.8 529.0,294.7 530.0,295.8 531.0,299.9 532.0,301.7 533.0,304.5 534.0,305.8 535.0,307.6 536.0,310.4 537.0,312.1 538.0,314.7 539.0,316.1 540.0,317.0 541.0,315.7 542.0,312.8 543.0,309.2 544.0,307.5 545.0,304.3 546.0,302.2 547.0,299.6 548.0,296.1 549.0,295.3 550.0,292.6 551.0,294.4 552.0,295.4 553.0,297.4 554.0,299.6 555.0,303.3 556.0,304.9 557.0,307.6 558.0,309.2 559.0,310.8 560.0,313.2 561.0,314.0 562.0,314.9 563.0,312.1 564.0,309.8 565.0,307.9 566.0,304.3 567.0,302.8 568.0,300.3 569.0,296.9 570.0,295.1 571.0,294.4 572.0,291.8 573.0,294.6 574.0,295.4 575.0,297.8 576.0,300.4 577.0,302.4 578.0,304.0 579.0,305.0 580.0,308.4 581.0,309.8 582.0,312.1 583.0,314.2 584.0,311.7 585.0,309.6 586.0,306.8 587.0,305.5 588.0,302.6 589.0,301.2 590.0,299.3 591.0,297.0 592.0,294.4 593.0,292.9 594.0,291.7 595.0,293.4 596.0,295.2 597.0,297.0 598.0,298.9 599.0,301.4 600.0,303.3 601.0,304.7 602.0,306.6 603.0,308.9 604.0,310.1 605.0,311.2 606.0,308.9 607.0,308.4 608.0,305.2 609.0,303.5 610.0,302.2 611.0,299.8 612.0,297.6 613.0,293.9 614.0,291.3 615.0,290.9 616.0,291.1 617.0,293.3 618.0,294.6 619.0,295.4 620.0,298.3 621.0,299.8 622.0,302.2 623.0,304.7 624.0,306.0 625.0,306.8 626.0,309.4 627.0,310.8 628.0,308.3 629.0,307.3 630.0,304.1 631.0,301.8 632.0,300.0 633.0,297.3 634.0,294.5 635.0,292.9 636.0,291.3 637.0,290.0 638.0,290.0 639.0,292.7 640.0,295.0 641.0,295.9 642.0,297.8 643.0,300.7 644.0,300.7 645.0,303.6 646.0,305.4 647.0,307.1 648.0,309.3 649.0,308.7 650.0,306.8 651.0,304.7 652.0,303.0 653.0,299.2 654.0,298.4 655.0,296.7 656.0,293.5 657.0,291.8 658.0,288.9 659.0,289.3 660.0,288.9 661.0,291.7 662.0,294.0 663.0,295.8 664.0,297.2 665.0,299.7 666.0,301.1 667.0,303.0 668.0,304.8 669.0,305.5 670.0,309.1 671.0,308.1 672.0,305.2 673.0,304.1 674.0,300.4 675.0,298.6 676.0,295.8 677.0,294.1 678.0,290.9 679.0,288.8 680.0,287.4 681.0,286.8 682.0,288.9 683.0,292.2 684.0,292.5 685.0,295.9 686.0,297.3 687.0,297.8 688.0,300.7 689.0,302.6 690.0,304.9 691.0,306.1 692.0,306.7 693.0,305.0 694.0,303.0 695.0,301.9 696.0,299.2 697.0,297.9 698.0,295.2 699.0,293.0 700.0,290.9 701.0,288.8 702.0,286.0 703.0,286.7 704.0,289.9 705.0,290.6 706.0,293.0 707.0,294.9 708.0,296.9 709.0,297.8 710.0,300.2 711.0,303.6 712.0,303.4 713.0,306.6 714.0,307.9 715.0,305.0 716.0,302.0 717.0,301.4 718.0,298.7 719.0,295.9 720.0,294.2 721.0,292.0 722.0,290.4 723.0,287.4 724.0,286.1 725.0,288.1 726.0,289.8 727.0,291.6 728.0,294.0 729.0,295.4 730.0,296.9 731.0,298.8 732.0,301.2 733.0,302.6 734.0,304.8 735.0,306.0 736.0,306.0 737.0,304.5 738.0,301.5 739.0,299.9 740.0,297.1 741.0,295.9 742.0,294.1 743.0,290.0 744.0,288.9 745.0,287.0 746.0,287.0 747.0,287.6 748.0,289.3 749.0,291.6 750.0,293.0 751.0,295.0 752.0,296.4 753.0,299.9 754.0,300.7 755.0,302.1 756.0,304.3 757.0,306.4 758.0,305.5 759.0,302.1 760.0,301.0 761.0,298.8 762.0,297.6 763.0,295.4 764.0,292.1 765.0,289.0 766.0,286.9 767.0,287.0 768.0,285.4 769.0,288.0 770.0,288.3 771.0,290.6 772.0,293.0 773.0,295.5" fill="none" stroke="#000" stroke-width="1.5" stroke-linejoin="round"/>
<polyline points="95.0,330.0 96.0,329.9 97.0,328.7 98.0,330.1 99.0,327.7 100.0,325.7 101.0,324.4 102.0,322.8 103.0,320.8 104.0,320.6 105.0,318.2 106.0,317.3 107.0,316.4 108.0,315.5 109.0,313.7 110.0,312.9 111.0,311.6 112.0,309.8 113.0,306.6 114.0,305.9 115.0,304.7 116.0,304.2 117.0,300.9 118.0,300.7 119.0,300.4 120.0,297.6 121.0,297.2 122.0,301.1 123.0,302.6 124.0,307.1 125.0,309.7 126.0,313.5 127.0,315.9 128.0,321.2 129.0,324.3 130.0,327.2 131.0,328.9 132.0,333.3 133.0,336.5 134.0,340.9 135.0,342.6 136.0,344.6 137.0,346.3 138.0,346.4 139.0,345.1 140.0,345.3 141.0,343.7 142.0,340.9 143.0,340.7 144.0,338.5 145.0,336.3 146.0,335.7 147.0,334.5 148.0,331.8 149.0,329.5 150.0,327.4 151.0,325.8 152.0,323.7 153.0,324.1 154.0,321.3 155.0,320.3 156.0,320.2 157.0,316.6 158.0,315.3 159.0,314.0 160.0,311.8 161.0,309.7 162.0,308.5 163.0,309.1 164.0,305.8 165.0,304.9 166.0,302.7 167.0,301.1 168.0,300.2 169.0,298.1 170.0,297.7 171.0,298.6 172.0,301.0 173.0,303.6 174.0,307.5 175.0,309.0 176.0,312.3 177.0,315.3 178.0,317.6 179.0,321.5 180.0,322.4 181.0,324.9 182.0,328.6 183.0,331.3 184.0,334.0 185.0,336.6 186.0,338.1 187.0,340.7 188.0,342.8 189.0,345.2 190.0,344.9 191.0,346.1 192.0,344.8 193.0,345.0 194.0,343.2 195.0,342.6 196.0,340.6 197.0,338.5 198.0,338.0 199.0,334.4 200.0,333.8 201.0,331.2 202.0,330.0 203.0,328.8 204.0,327.3 205.0,325.6 206.0,323.6 207.0,323.0 208.0,320.7 209.0,318.7 210.0,316.2 211.0,315.3 212.0,312.3 213.0,310.7 214.0,311.8 215.0,308.2 216.0,308.2 217.0,305.4 218.0,303.8 219.0,301.6 220.0,300.4 221.0,299.6 222.0,298.9 223.0,297.1 224.0,298.7 225.0,302.1 226.0,304.8 227.0,308.0 228.0,310.1 229.0,313.1 230.0,314.2 231.0,317.0 232.0,320.7 233.0,323.9 234.0,326.8 235.0,329.3 236.0,330.5 237.0,334.2 238.0,337.3 239.0,338.1 240.0,342.0 241.0,343.4 242.0,345.5 243.0,345.9 244.0,347.7 245.0,346.3 246.0,345.7 247.0,343.0 248.0,340.9 249.0,340.4 250.0,339.8 251.0,338.2 252.0,335.7 253.0,333.3 254.0,332.8 255.0,332.2 256.0,330.0 257.0,327.8 258.0,325.8 259.0,324.3 260.0,323.6 261.0,321.4 262.0,319.9 263.0,318.1 264.0,316.5 265.0,315.9 266.0,313.9 267.0,312.6 268.0,310.0 269.0,307.9 270.0,307.5 271.0,305.2 272.0,305.0 273.0,302.5 274.0,301.8 275.0,300.8 276.0,298.4 277.0,300.6 278.0,303.9 279.0,306.4 280.0,306.9 281.0,310.6 282.0,312.7 283.0,316.0 284.0,318.7 285.0,321.1 286.0,324.6 287.0,326.2 288.0,328.4 289.0,332.9 290.0,334.4 291.0,335.8 292.0,340.0 293.0,342.8 294.0,344.3 295.0,345.2 296.0,346.1 297.0,345.8 298.0,346.4 299.0,344.9 300.0,342.7 301.0,342.0 302.0,341.0 303.0,338.8 304.0,337.8 305.0,336.4 306.0,333.8 307.0,333.8 308.0,332.0 309.0,329.4 310.0,327.2 311.0,325.2 312.0,325.0 313.0,322.0 314.0,322.0 315.0,321.0 316.0,318.8 317.0,314.9 318.0,315.5 319.0,312.6 320.0,312.1 321.0,310.0 322.0,308.9 323.0,307.5 324.0,306.5 325.0,303.6 326.0,301.2 327.0,299.8 328.0,299.2 329.0,300.0 330.0,304.1 331.0,306.7 332.0,308.0 333.0,310.7 334.0,311.9 335.0,315.3 336.0,318.1 337.0,320.6 338.0,322.5 339.0,324.7 340.0,326.3 341.0,328.0 342.0,330.3 343.0,333.8 344.0,337.1 345.0,338.3 346.0,341.1 347.0,343.4 348.0,343.7 349.0,346.8 350.0,346.4 351.0,345.5 352.0,346.1 353.0,345.0 354.0,342.4 355.0,342.1 356.0,341.1 357.0,339.3 358.0,337.0 359.0,334.8 360.0,333.2 361.0,332.0 362.0,329.9 363.0,328.5 364.0,325.3 365.0,324.7 366.0,322.6 367.0,319.9 368.0,319.6 369.0,318.3 370.0,316.5 371.0,314.1 372.0,312.8 373.0,311.3 374.0,309.3 375.0,307.8 376.0,305.0 377.0,304.3 378.0,302.7 379.0,301.8 380.0,299.1 381.0,298.2 382.0,297.4 383.0,295.1 384.0,292.0 385.0,290.0 386.0,290.1 387.0,288.1 388.0,284.8 389.0,289.6 390.0,292.6 391.0,297.4 392.0,302.2 393.0,303.8 394.0,309.0 395.0,312.3 396.0,316.8 397.0,321.6 398.0,324.6 399.0,329.7 400.0,331.7 401.0,335.9 402.0,339.5 403.0,340.7 404.0,343.3 405.0,343.7 406.0,343.1 407.0,344.2 408.0,342.8 409.0,339.2 410.0,337.7 411.0,336.7 412.0,335.7 413.0,333.1 414.0,331.5 415.0,329.7 416.0,328.4 417.0,326.8 418.0,327.3 419.0,324.8 420.0,322.0 421.0,322.2 422.0,319.9 423.0,318.5 424.0,316.3 425.0,315.9 426.0,314.8 427.0,312.7 428.0,310.4 429.0,308.2 430.0,307.6 431.0,305.1 432.0,305.3 433.0,303.5 434.0,301.0 435.0,300.0 436.0,296.9 437.0,296.7 438.0,296.1 439.0,294.3 440.0,292.8 441.0,290.3 442.0,293.5 443.0,297.8 444.0,299.3 445.0,304.4 446.0,304.2 447.0,308.1 448.0,311.9 449.0,314.0 450.0,318.4 451.0,320.5 452.0,322.5 453.0,325.7 454.0,329.0 455.0,331.3 456.0,333.5 457.0,334.9 458.0,334.2 459.0,333.9 460.0,332.1 461.0,331.7 462.0,331.2 463.0,329.3 464.0,327.3 465.0,326.8 466.0,324.4 467.0,323.2 468.0,320.3 469.0,317.8 470.0,317.4 471.0,317.7 472.0,314.7 473.0,311.8 474.0,312.1 475.0,311.4 476.0,309.4 477.0,307.0 478.0,305.1 479.0,303.8 480.0,301.8 481.0,300.5 482.0,299.0 483.0,297.4 484.0,297.1 485.0,295.1 486.0,291.7 487.0,292.2 488.0,290.2 489.0,287.0 490.0,287.6 491.0,290.8 492.0,293.7 493.0,296.0 494.0,300.2 495.0,303.1 496.0,305.9 497.0,310.0 498.0,312.5 499.0,316.3 500.0,317.6 501.0,321.4 502.0,324.8 503.0,329.4 504.0,333.1 505.0,335.8 506.0,337.9 507.0,339.7 508.0,341.4 509.0,340.5 510.0,341.0 511.0,341.8 512.0,339.3 513.0,337.3 514.0,335.9 515.0,334.8 516.0,333.3 517.0,331.8 518.0,330.3 519.0,327.9 520.0,327.2 521.0,325.1 522.0,323.2 523.0,323.4 524.0,320.0 525.0,319.6 526.0,318.7 527.0,317.8 528.0,314.1 529.0,312.3 530.0,311.9 531.0,311.0 532.0,309.7 533.0,308.9 534.0,305.3 535.0,305.8 536.0,303.4 537.0,302.2 538.0,300.2 539.0,299.7 540.0,297.0 541.0,296.2 542.0,293.3 543.0,297.6 544.0,300.1 545.0,301.9 546.0,305.3 547.0,307.5 548.0,311.7 549.0,312.4 550.0,316.9 551.0,319.3 552.0,321.5 553.0,323.9 554.0,327.6 555.0,330.2 556.0,331.8 557.0,334.5 558.0,336.4 559.0,339.5 560.0,338.5 561.0,339.9 562.0,338.7 563.0,339.4 564.0,337.3 565.0,336.4 566.0,334.0 567.0,333.2 568.0,331.6 569.0,331.2 570.0,329.4 571.0,327.6 572.0,327.1 573.0,325.0 574.0,322.3 575.0,322.4 576.0,320.2 577.0,318.1 578.0,318.4 579.0,315.7 580.0,314.9 581.0,313.0 582.0,313.3 583.0,310.7 584.0,309.7 585.0,308.6 586.0,308.2 587.0,305.0 588.0,302.9 589.0,302.9 590.0,300.2 591.0,300.6 592.0,298.2 593.0,297.1 594.0,294.2 595.0,295.3 596.0,292.0 597.0,291.8 598.0,293.1 599.0,297.5 600.0,298.0 601.0,299.5 602.0,304.3 603.0,305.0 604.0,308.8 605.0,310.4 606.0,312.6 607.0,315.4 608.0,319.1 609.0,321.3 610.0,323.6 611.0,324.9 612.0,327.9 613.0,330.0 614.0,333.5 615.0,336.3 616.0,336.8 617.0,338.1 618.0,337.4 619.0,337.7 620.0,336.8 621.0,334.9 622.0,333.4 623.0,333.6 624.0,331.2 625.0,329.3 626.0,327.9 627.0,327.1 628.0,324.7 629.0,324.3 630.0,323.4 631.0,321.0 632.0,319.7 633.0,319.7 634.0,317.8 635.0,314.4 636.0,314.5 637.0,312.6 638.0,312.2 639.0,310.0 640.0,307.3 641.0,308.9 642.0,305.1 643.0,304.3 644.0,304.4 645.0,301.6 646.0,300.5 647.0,298.8 648.0,297.2 649.0,296.3 650.0,294.6 651.0,294.3 652.0,292.2 653.0,291.9 654.0,293.4 655.0,295.4 656.0,300.6 657.0,302.8 658.0,307.5 659.0,309.3 660.0,310.1 661.0,314.0 662.0,318.7 663.0,319.7 664.0,324.2 665.0,325.8 666.0,328.7 667.0,332.2 668.0,335.2 669.0,337.6 670.0,338.3 671.0,339.8 672.0,339.9 673.0,340.7 674.0,340.5 675.0,338.6 676.0,336.1 677.0,336.5 678.0,335.3 679.0,333.1 680.0,333.3 681.0,332.2 682.0,329.9 683.0,329.2 684.0,326.8 685.0,326.4 686.0,324.2 687.0,324.1 688.0,322.9 689.0,321.4 690.0,320.1 691.0,318.8 692.0,318.0 693.0,314.5 694.0,314.6 695.0,313.8 696.0,312.6 697.0,311.4 698.0,309.8 699.0,309.2 700.0,306.7 701.0,304.1 702.0,303.9 703.0,302.6 704.0,301.4 705.0,300.5 706.0,298.6 707.0,297.1 708.0,296.4 709.0,295.2 710.0,299.2 711.0,299.0 712.0,302.5 713.0,304.4 714.0,305.8 715.0,307.8 716.0,312.4 717.0,314.1 718.0,317.7 719.0,320.2 720.0,322.3 721.0,323.0 722.0,326.7 723.0,328.6 724.0,330.9 725.0,333.3 726.0,335.2 727.0,335.9 728.0,338.3 729.0,336.5 730.0,337.1 731.0,337.2 732.0,335.6 733.0,334.2 734.0,331.1 735.0,330.9 736.0,328.3 737.0,325.7 738.0,323.8 739.0,322.2 740.0,321.5 741.0,322.3 742.0,318.6 743.0,317.4 744.0,315.6 745.0,313.7 746.0,312.1 747.0,310.4 748.0,309.0 749.0,307.4 750.0,306.5 751.0,305.8 752.0,302.9 753.0,301.5 754.0,301.0 755.0,297.6 756.0,297.3 757.0,294.5 758.0,293.7 759.0,292.4 760.0,291.4 761.0,294.4 762.0,299.5 763.0,301.8 764.0,305.7 765.0,309.5 766.0,313.4 767.0,316.4 768.0,320.9 769.0,325.3 770.0,327.9 771.0,329.2 772.0,332.5 773.0,332.1" fill="none" stroke="#1c7cd0" stroke-width="1.3" stroke-linejoin="round"/>
<polyline points="95.0,562.0 96.0,560.8 97.0,559.5 98.0,561.2 99.0,561.0 100.0,561.5 101.0,564.5 102.0,564.5 103.0,567.5 104.0,567.1 105.0,564.2 106.0,565.8 107.0,562.9 108.0,563.0 109.0,563.0 110.0,563.9 111.0,563.9 112.0,562.3 113.0,562.8 114.0,564.7 115.0,564.7 116.0,562.1 117.0,563.6 118.0,562.5 119.0,565.0 120.0,562.5 121.0,564.4 122.0,563.4 123.0,563.3 124.0,561.8 125.0,562.2 126.0,563.2 127.0,563.1 128.0,561.6 129.0,563.0 130.0,562.0 131.0,562.9 132.0,562.9 133.0,561.3 134.0,561.2 135.0,562.7 136.0,564.1 137.0,562.5 138.0,562.5 139.0,563.9 140.0,562.3 141.0,562.3 142.0,561.2 143.0,562.1 144.0,562.1 145.0,560.5 146.0,562.9 147.0,561.9 148.0,560.8 149.0,560.2 150.0,560.2 151.0,561.6 152.0,561.5 153.0,561.5 154.0,562.9 155.0,559.8 156.0,559.8 157.0,559.7 158.0,562.6 159.0,561.1 160.0,559.5 161.0,562.5 162.0,561.0 163.0,560.9 164.0,559.4 165.0,561.9 166.0,559.4 167.0,559.8 168.0,559.8 169.0,559.3 170.0,560.8 171.0,560.7 172.0,559.2 173.0,560.7 174.0,560.6 175.0,560.6 176.0,560.6 177.0,559.1 178.0,559.0 179.0,562.0 180.0,561.5 181.0,560.5 182.0,559.5 183.0,560.4 184.0,560.4 185.0,558.9 186.0,561.4 187.0,560.3 188.0,561.8 189.0,561.8 190.0,559.2 191.0,561.2 192.0,560.2 193.0,560.2 194.0,560.1 195.0,561.1 196.0,558.6 197.0,559.1 198.0,559.0 199.0,558.5 200.0,560.0 201.0,560.0 202.0,561.4 203.0,559.9 204.0,559.9 205.0,558.3 206.0,559.8 207.0,558.3 208.0,561.2 209.0,558.7 210.0,558.7 211.0,558.6 212.0,561.1 213.0,561.1 214.0,558.5 215.0,559.5 216.0,561.0 217.0,560.9 218.0,560.4 219.0,559.4 220.0,559.3 221.0,559.3 222.0,559.3 223.0,560.2 224.0,557.7 225.0,557.7 226.0,560.6 227.0,560.6 228.0,560.1 229.0,559.0 230.0,560.5 231.0,560.1 232.0,557.6 233.0,559.2 234.0,560.8 235.0,559.3 236.0,560.4 237.0,561.0 238.0,559.5 239.0,560.6 240.0,558.7 241.0,559.7 242.0,558.8 243.0,558.9 244.0,558.4 245.0,559.0 246.0,561.1 247.0,561.6 248.0,560.2 249.0,561.8 250.0,559.3 251.0,560.4 252.0,559.0 253.0,560.5 254.0,560.6 255.0,560.7 256.0,560.7 257.0,559.8 258.0,560.9 259.0,561.9 260.0,562.5 261.0,562.6 262.0,562.7 263.0,561.2 264.0,561.3 265.0,562.9 266.0,561.5 267.0,563.1 268.0,563.1 269.0,562.7 270.0,561.8 271.0,561.9 272.0,563.5 273.0,563.5 274.0,563.6 275.0,563.2 276.0,560.8 277.0,563.9 278.0,561.4 279.0,562.5 280.0,563.6 281.0,562.7 282.0,563.8 283.0,563.8 284.0,561.9 285.0,564.5 286.0,562.4 287.0,563.8 288.0,565.7 289.0,566.1 290.0,563.5 291.0,565.1 292.0,565.2 293.0,566.3 294.0,565.4 295.0,564.0 296.0,564.6 297.0,564.7 298.0,564.3 299.0,565.9 300.0,566.0 301.0,566.9 302.0,567.3 303.0,565.7 304.0,567.1 305.0,564.5 306.0,564.4 307.0,566.3 308.0,565.2 309.0,566.1 310.0,566.5 311.0,564.5 312.0,565.5 313.0,563.5 314.0,563.0 315.0,561.5 316.0,563.0 317.0,562.5 318.0,561.0 319.0,562.2 320.0,561.3 321.0,560.0 322.0,558.7 323.0,560.3 324.0,560.0 325.0,558.7 326.0,558.3 327.0,558.0 328.0,557.7 329.0,557.3 330.0,557.0 331.0,558.5 332.0,555.6 333.0,557.1 334.0,557.1 335.0,558.2 336.0,558.2 337.0,557.2 338.0,556.3 339.0,558.8 340.0,558.3 341.0,558.9 342.0,557.4 343.0,557.4 344.0,557.5 345.0,556.5 346.0,557.5 347.0,559.1 348.0,557.6 349.0,557.6 350.0,556.2 351.0,556.7 352.0,559.2 353.0,557.8 354.0,557.8 355.0,557.8 356.0,558.9 357.0,557.9 358.0,557.9 359.0,558.0 360.0,559.0 361.0,559.0 362.0,557.9 363.0,557.9 364.0,557.8 365.0,557.8 366.0,559.2 367.0,559.1 368.0,558.6 369.0,556.5 370.0,558.5 371.0,558.5 372.0,557.4 373.0,557.4 374.0,558.8 375.0,557.2 376.0,556.2 377.0,557.1 378.0,556.1 379.0,558.5 380.0,558.0 381.0,558.6 382.0,558.2 383.0,557.3 384.0,557.4 385.0,559.0 386.0,557.6 387.0,557.7 388.0,557.8 389.0,557.9 390.0,557.0 391.0,558.1 392.0,558.2 393.0,558.3 394.0,558.4 395.0,559.5 396.0,558.6 397.0,560.2 398.0,557.3 399.0,557.9 400.0,558.0 401.0,560.4 402.0,558.8 403.0,560.2 404.0,559.7 405.0,557.1 406.0,557.5 407.0,558.4 408.0,556.8 409.0,558.2 410.0,558.2 411.0,558.1 412.0,559.0 413.0,552.0 414.0,544.5 415.0,550.5 416.0,553.5 417.0,556.5 418.0,555.0 419.0,556.5 420.0,556.0 421.0,558.5 422.0,557.1 423.0,557.1 424.0,557.2 425.0,555.8 426.0,557.3 427.0,557.4 428.0,557.4 429.0,557.5 430.0,557.5 431.0,557.5 432.0,558.6 433.0,557.6 434.0,559.2 435.0,557.8 436.0,557.8 437.0,559.4 438.0,558.9 439.0,556.5 440.0,556.5 441.0,556.4 442.0,559.4 443.0,556.8 444.0,557.7 445.0,557.7 446.0,557.6 447.0,557.5 448.0,559.0 449.0,557.4 450.0,557.3 451.0,555.8 452.0,555.7 453.0,557.1 454.0,558.1 455.0,558.0 456.0,555.9 457.0,558.4 458.0,555.3 459.0,556.7 460.0,555.7 461.0,556.6 462.0,556.5 463.0,556.5 464.0,555.4 465.0,556.3 466.0,556.3 467.0,555.2 468.0,555.1 469.0,556.1 470.0,555.0 471.0,555.9 472.0,557.4 473.0,555.8 474.0,554.2 475.0,555.7 476.0,554.6 477.0,554.0 478.0,555.5 479.0,556.9 480.0,555.3 481.0,555.3 482.0,556.7 483.0,555.1 484.0,555.1 485.0,556.0 486.0,556.4 487.0,554.9 488.0,553.3 489.0,554.7 490.0,556.2 491.0,553.6 492.0,554.5 493.0,553.5 494.0,555.9 495.0,554.3 496.0,552.8 497.0,554.2 498.0,553.1 499.0,554.1 500.0,554.0 501.0,555.5 502.0,554.1 503.0,553.1 504.0,554.2 505.0,552.8 506.0,554.3 507.0,554.4 508.0,554.4 509.0,554.5 510.0,553.0 511.0,554.5 512.0,554.6 513.0,553.1 514.0,553.7 515.0,555.8 516.0,554.8 517.0,553.9 518.0,556.4 519.0,555.0 520.0,555.0 521.0,554.6 522.0,555.2 523.0,556.8 524.0,557.4 525.0,558.0 526.0,558.0 527.0,559.0 528.0,559.5 529.0,558.0 530.0,558.0 531.0,559.5 532.0,558.0 533.0,558.0 534.0,557.0 535.0,558.0 536.0,557.9 537.0,556.7 538.0,556.6 539.0,557.5 540.0,557.3 541.0,558.2 542.0,557.1 543.0,555.4 544.0,558.3 545.0,555.2 546.0,556.5 547.0,557.4 548.0,555.3 549.0,557.6 550.0,556.0 551.0,555.8 552.0,555.6 553.0,556.9 554.0,555.2 555.0,555.0 556.0,553.8 557.0,554.6 558.0,554.4 559.0,554.2 560.0,554.0 561.0,553.4 562.0,554.8 563.0,554.2 564.0,555.6 565.0,556.0 566.0,557.7 567.0,554.9 568.0,556.6 569.0,556.8 570.0,555.5 571.0,557.2 572.0,556.4 573.0,559.1 574.0,558.8 575.0,558.0 576.0,559.0 577.0,558.0 578.0,557.1 579.0,558.1 580.0,559.6 581.0,559.6 582.0,559.2 583.0,558.2 584.0,558.2 585.0,558.2 586.0,557.2 587.0,558.3 588.0,557.3 589.0,558.3 590.0,558.3 591.0,559.4 592.0,558.4 593.0,558.4 594.0,559.9 595.0,558.4 596.0,559.5 597.0,560.0 598.0,558.5 599.0,557.0 600.0,558.6 601.0,558.6 602.0,559.6 603.0,558.6 604.0,560.1 605.0,558.7 606.0,559.7 607.0,557.2 608.0,557.7 609.0,560.3 610.0,558.8 611.0,558.8 612.0,558.8 613.0,558.8 614.0,559.9 615.0,557.4 616.0,557.4 617.0,557.4 618.0,560.5 619.0,559.0 620.0,560.0 621.0,559.1 622.0,559.1 623.0,559.2 624.0,559.3 625.0,557.8 626.0,557.9 627.0,560.5 628.0,558.5 629.0,561.1 630.0,558.2 631.0,559.7 632.0,560.8 633.0,561.4 634.0,559.9 635.0,560.0 636.0,559.9 637.0,561.2 638.0,558.1 639.0,561.0 640.0,558.3 641.0,559.2 642.0,559.1 643.0,557.9 644.0,560.3 645.0,557.7 646.0,558.5 647.0,559.9 648.0,556.8 649.0,558.1 650.0,558.0 651.0,558.1 652.0,559.2 653.0,559.8 654.0,558.4 655.0,558.5 656.0,558.6 657.0,557.2 658.0,558.8 659.0,559.9 660.0,560.0 661.0,560.6 662.0,559.2 663.0,559.3 664.0,560.4 665.0,558.5 666.0,560.6 667.0,559.7 668.0,559.8 669.0,559.9 670.0,558.5 671.0,560.1 672.0,561.7 673.0,561.8 674.0,561.9 675.0,560.5 676.0,562.1 677.0,559.2 678.0,562.3 679.0,559.9 680.0,562.0 681.0,562.6 682.0,561.2 683.0,561.3 684.0,562.9 685.0,561.5 686.0,560.1 687.0,560.7 688.0,560.8 689.0,562.9 690.0,562.0 691.0,563.0 692.0,563.6 693.0,563.1 694.0,562.1 695.0,562.2 696.0,562.2 697.0,562.2 698.0,562.3 699.0,563.3 700.0,562.3 701.0,562.4 702.0,562.4 703.0,562.4 704.0,562.5 705.0,563.5 706.0,564.0 707.0,562.6 708.0,562.6 709.0,562.6 710.0,561.2 711.0,561.2 712.0,562.7 713.0,562.8 714.0,562.8 715.0,564.3 716.0,563.9 717.0,561.4 718.0,563.9 719.0,562.0 720.0,564.0 721.0,563.1 722.0,561.7 723.0,562.3 724.0,563.4 725.0,563.5 726.0,565.1 727.0,563.7 728.0,562.3 729.0,563.9 730.0,564.0 731.0,564.1 732.0,564.2 733.0,563.3 734.0,563.4 735.0,565.5 736.0,565.6 737.0,566.2 738.0,564.8 739.0,564.9 740.0,565.0 741.0,565.1 742.0,564.2 743.0,565.3 744.0,566.4 745.0,566.5 746.0,565.6 747.0,567.2 748.0,565.8 749.0,565.9 750.0,564.5 751.0,567.1 752.0,565.2 753.0,564.8 754.0,565.4 755.0,566.5 756.0,568.1 757.0,566.7 758.0,565.3 759.0,565.9 760.0,565.5 761.0,566.1 762.0,568.2 763.0,568.7 764.0,568.3 765.0,568.4 766.0,567.5 767.0,566.5 768.0,567.6 769.0,569.2 770.0,567.8 771.0,567.8 772.0,566.9 773.0,568.0" fill="none" stroke="#d80000" stroke-width="1.5" stroke-linejoin="round"/>
</svg>
<div class="a mono ax" style="right:1594px;top:122px">-50.0</div>
<div class="a mono ax" style="right:1594px;top:190px">-55.0</div>
<div class="a mono ax" style="right:1594px;top:258px">-60.0</div>
<div class="a mono ax" style="right:1594px;top:326px">-65.0</div>
<div class="a mono ax" style="right:1594px;top:394px">-70.0</div>
<div class="a mono ax" style="right:1594px;top:461px">-75.0</div>
<div class="a mono ax" style="right:1594px;top:529px">-80.0</div>
<div class="a mono ax" style="right:1594px;top:597px">-85.0</div>
<div class="a mono ax" style="right:1594px;top:665px">-90.0</div>
<div class="a mono ax" style="right:1594px;top:733px">-95.0</div>
<div class="a mono ax" style="right:1594px;top:801px">-100.0</div>
<div class="a mono ax" style="right:1590px;top:110px">Y1</div>
<div class="a mono xl" style="left:99px;top:828px">2026/01/14<br>12:07:18.5</div>
<div class="a mono xl" style="left:212px;top:828px">2026/01/14<br>14:15:42.0</div>
<div class="a mono xl" style="left:325px;top:828px">2026/01/14<br>16:24:05.5</div>
<div class="a mono xl" style="left:438px;top:828px">2026/01/14<br>18:32:29.0</div>
<div class="a mono xl" style="left:551px;top:828px">2026/01/14<br>20:40:52.5</div>
<div class="a mono xl" style="left:664px;top:828px">2026/01/14<br>22:49:16.0</div>
<div class="a mono xl" style="left:779px;top:828px">2026/01/15<br>0:57:39.5</div>
<div class="a" style="left:31px;top:875px;width:135px;height:39px;background:#fff"></div><div class="a mono lg" style="left:32px;top:876px;color:#7a0c0c">Comp-low<br>CH1 [°C]<br>-----</div>
<div class="a" style="left:168px;top:875px;width:135px;height:39px;background:#fff"></div><div class="a mono lg" style="left:169px;top:876px;color:#a09a10">Comp-High<br>CH2 [°C]<br>-----</div>
<div class="a" style="left:305px;top:875px;width:135px;height:39px;background:#fff"></div><div class="a mono lg" style="left:306px;top:876px;color:#1878d0">MDF-330-2(-50)<br>CH3 [°C]<br>-66.0</div>
<div class="a" style="left:442px;top:875px;width:135px;height:39px;background:#fff"></div><div class="a mono lg" style="left:443px;top:876px;color:#30c030"><br>CH4 []<br>-----</div>
<div class="a" style="left:579px;top:875px;width:135px;height:39px;background:#fff"></div><div class="a mono lg" style="left:580px;top:876px;color:#000">MDF-190<br>CH5 [°C]<br>-62.5</div>
<div class="a" style="left:716px;top:875px;width:135px;height:39px;background:#fff"></div><div class="a mono lg" style="left:717px;top:876px;color:#c80000">2110Temp<br>CH6 [mV]<br>-82.7</div>
<div class="a" style="left:23px;top:933px;width:839px;height:41px;border-top:1px solid #fff;border-left:1px solid #fff;border-right:1px solid #808080;border-bottom:1px solid #808080"></div>
<div class="a raised" style="left:31px;top:941px;width:82px;height:26px"></div>
<div class="a" style="left:31px;top:941px;width:82px;height:26px;line-height:25px;text-align:center;font-size:12px"><span class="jh">ｱﾗｰﾑﾘｾｯﾄ</span></div>
<div class="a sunken" style="left:119px;top:941px;width:734px;height:27px;background:#fff"></div>
<div class="a raised" style="left:835px;top:943px;width:16px;height:23px"></div>
<svg class="a" style="left:835px;top:943px" width="16" height="23"><path d="M4.5 10 H11.5 L8 14 Z" fill="#000"/></svg>
<div class="a" style="left:15px;top:988px;width:151px;height:19px;border-top:1px solid #808080;border-left:1px solid #808080;border-right:1px solid #fff;border-bottom:1px solid #fff"></div>
<div class="a" style="left:17px;top:989px;height:17px;line-height:17px;font-size:12px"><span class="jf">保存</span><span class="jh">ｳｪｲﾄ</span><span class="jf">！！</span></div>
<div class="a" style="left:167px;top:988px;width:703px;height:19px;border-top:1px solid #808080;border-left:1px solid #808080;border-right:1px solid #fff;border-bottom:1px solid #fff"></div>
<svg class="a" style="left:857px;top:994px" width="13" height="13"><path d="M12 1 L1 12 M12 4 L4 12 M12 8 L8 12" stroke="#808080" stroke-width="1"/><path d="M12 2 L2 12 M12 5 L5 12 M12 9 L9 12" stroke="#fff" stroke-width="1"/></svg><!-- ============ Taskbar ============ -->
<div class="a" style="left:0;top:1020px;width:1680px;height:30px;background:#d4d0c8;border-top:1px solid #d4d0c8;box-shadow:inset 0 1px 0 #fff"></div>
<div class="a raised" style="left:2px;top:1024px;width:62px;height:22px"></div>
<svg class="a" style="left:5px;top:1026px" width="16" height="16"><path d="M1 3 Q4 1 7 3 L6 8 Q3 6 1 8 Z" fill="#e05020"/><path d="M8 3 Q11 1 14 3 L13 8 Q10 6 7 8 Z" fill="#40a030"/><path d="M1 9 Q4 7 6 9 L5 14 Q2 12 0 14 Z" fill="#2050c0"/><path d="M7 9 Q10 7 13 9 L12 14 Q9 12 6 14 Z" fill="#f0c020"/></svg>
<div class="a nols" style="left:22px;top:1025px;height:20px;line-height:20px;font-size:12px;font-weight:bold;white-space:nowrap"><span class="jf">スタート</span></div>
<!-- quick launch -->
<svg class="a" style="left:72px;top:1027px" width="16" height="16"><circle cx="8" cy="9" r="6" fill="#3a8ee0"/><path d="M4 9 H12 M5 12 Q8 14 12 11" stroke="#fff" stroke-width="1.5" fill="none"/><path d="M2 13 Q8 -2 15 3" stroke="#f0c030" stroke-width="1.2" fill="none"/></svg>
<svg class="a" style="left:94px;top:1027px" width="16" height="16"><rect x="2" y="2" width="12" height="12" rx="3" fill="#3a70c8"/><rect x="5" y="4" width="7" height="8" fill="#e0f0ff"/><path d="M6 10 L10 5" stroke="#204080" stroke-width="1.5"/></svg>
<svg class="a" style="left:117px;top:1028px" width="18" height="15"><path d="M1 3 H7 L8 5 H16 V14 H1 Z" fill="#f0d070" stroke="#a08020" stroke-width="0.8"/><circle cx="10" cy="9" r="3" fill="#c8e0f0" stroke="#406080"/></svg>
<!-- task buttons -->
<div class="a raised" style="left:142px;top:1024px;width:160px;height:22px"></div>
<svg class="a" style="left:146px;top:1028px" width="16" height="14"><rect x="0" y="0" width="16" height="14" fill="#000" stroke="#505a80"/><text x="1.5" y="10" font-family="Liberation Sans" font-size="8" font-weight="bold" fill="#fff">C:\</text></svg>
<div class="a" style="left:166px;top:1025px;height:20px;line-height:20px;font-size:11px;white-space:nowrap;width:132px;overflow:hidden">transfile.cmd <span class="jf">へのショート</span>...</div>
<div class="a raised" style="left:305px;top:1024px;width:160px;height:22px"></div>
<svg class="a" style="left:309px;top:1027px" width="16" height="16"><path d="M2 2 L14 4 L12 14 L3 13 Z" fill="#d0c0a0" stroke="#404040" stroke-width="0.8"/><path d="M4 5 L12 7 M4 8 L11 10" stroke="#c03030" stroke-width="1.2"/><circle cx="9" cy="4" r="2.5" fill="#2040a0"/></svg>
<div class="a" style="left:329px;top:1025px;height:20px;line-height:20px;font-size:11px;white-space:nowrap">PhotoImpression 2000</div>
<div class="a" style="left:468px;top:1024px;width:160px;height:22px;border-top:1px solid #404040;border-left:1px solid #404040;border-right:1px solid #fff;border-bottom:1px solid #fff;box-shadow:inset 1px 1px 0 #808080;background:repeating-conic-gradient(#fff 0 25%,#d4d0c8 0 50%) 0 0/2px 2px"></div>
<svg class="a" style="left:473px;top:1028px" width="16" height="16" viewBox="0 0 16 16"><rect x="0" y="0" width="16" height="16" fill="#222"/><rect x="1" y="1" width="14" height="7" fill="#e8e8f0"/><path d="M2 4 L6 3 L10 4 L14 3" stroke="#a050c0" stroke-width="1" fill="none"/><path d="M2 6 L14 6" stroke="#80c080" stroke-width="1"/><rect x="1" y="9" width="14" height="6" fill="#ddd"/><rect x="2" y="11" width="3" height="3" fill="#e00000"/><rect x="6" y="11" width="3" height="3" fill="#0000d0"/><rect x="10" y="10" width="4" height="4" fill="#00c000"/></svg>
<div class="a" style="left:493px;top:1026px;height:20px;line-height:20px;font-size:12px;font-weight:bold;white-space:nowrap"><span class="jf">ソフトサーモ</span> E830</div>
<!-- tray -->
<svg class="a" style="left:1547px;top:1029px" width="14" height="14"><path d="M3 4 Q5 1 7 4 Q9 1 11 4" stroke="#000" fill="none"/><rect x="1" y="6" width="12" height="7" fill="#fff" stroke="#000"/><path d="M3 8.5 H11 M3 10.5 H11" stroke="#000" stroke-dasharray="1 1"/></svg>
<div class="a" style="left:1564px;top:1024px;width:113px;height:23px;border-top:1px solid #808080;border-left:1px solid #808080;border-right:1px solid #fff;border-bottom:1px solid #fff"></div>
<svg class="a" style="left:1568px;top:1028px" width="14" height="16"><path d="M7 1 L13 3 V8 Q13 13 7 15 Q1 13 1 8 V3 Z" fill="#f0e020" stroke="#404880" stroke-width="0.8"/><path d="M7 5 V9" stroke="#000" stroke-width="1.6"/><circle cx="7" cy="11.5" r="0.9" fill="#000"/></svg>
<svg class="a" style="left:1586px;top:1028px" width="14" height="16"><path d="M7 1 L13 3 V8 Q13 13 7 15 Q1 13 1 8 V3 Z" fill="#c81828" stroke="#404880" stroke-width="0.8"/><path d="M4.5 5.5 L9.5 10.5 M9.5 5.5 L4.5 10.5" stroke="#fff" stroke-width="1.6"/></svg>
<svg class="a" style="left:1603px;top:1027px" width="16" height="16"><path d="M2 1 L8 4 L6 9 L1 6 Z" fill="#40b030"/><path d="M4 8 L14 6 L15 12 L6 15 Z" fill="#909aa8" stroke="#404040" stroke-width="0.6"/></svg>
<svg class="a" style="left:1622px;top:1029px" width="13" height="13"><path d="M6.5 0.5 L8.2 4.5 L12.5 4.8 L9.2 7.6 L10.2 12 L6.5 9.6 L2.8 12 L3.8 7.6 L0.5 4.8 L4.8 4.5 Z" fill="#f0e040" stroke="#b09020" stroke-width="0.6"/></svg>
<div class="a" style="left:1647px;top:1026px;height:18px;line-height:18px;font-size:11px;white-space:nowrap">0:58</div>
</body></html>
